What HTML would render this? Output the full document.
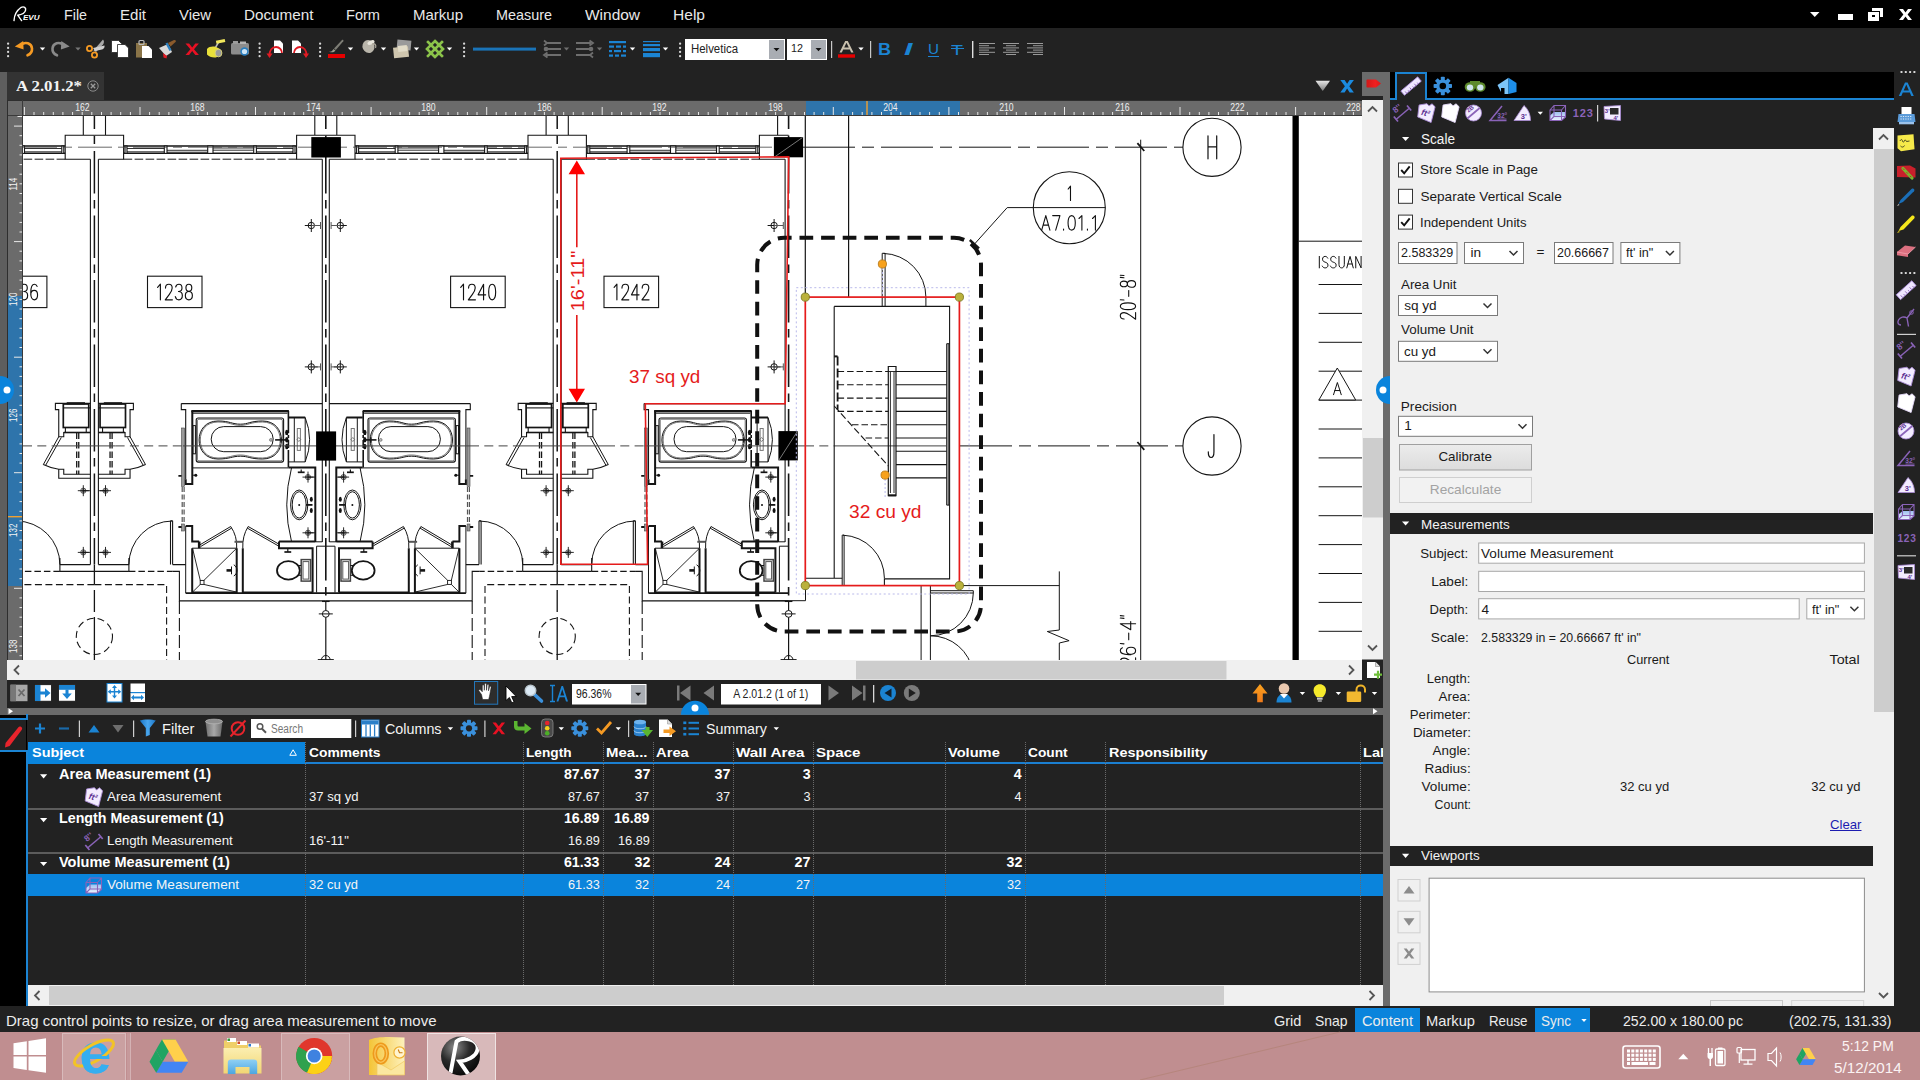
<!DOCTYPE html>
<html><head><meta charset="utf-8"><title>Revu</title>
<style>
*{box-sizing:border-box;margin:0;padding:0}
html,body{width:1920px;height:1080px;overflow:hidden;background:#222;font-family:"Liberation Sans",sans-serif;}
.a{position:absolute}
.t{position:absolute;white-space:nowrap;line-height:1}
svg{position:absolute;left:0;top:0;overflow:visible}
</style></head><body>
<!-- 00_base -->
<div class="a" style="left:0px;top:0px;width:1920px;height:28px;background:#000;"></div>
<div class="a" style="left:0px;top:28px;width:1920px;height:44px;background:#222;"></div>
<div class="a" style="left:0px;top:72px;width:1390px;height:29px;background:#222;"></div>
<div class="a" style="left:0px;top:72px;width:7px;height:643px;background:#5e5e5e;"></div>
<div class="a" style="left:7px;top:72px;width:97px;height:29px;background:#333;"></div>
<div class="a" style="left:8px;top:101px;width:1354px;height:15px;background:#6b6b6b;"></div>
<div class="a" style="left:8px;top:101px;width:15px;height:559px;background:#6b6b6b;"></div>
<div class="a" style="left:23px;top:116px;width:1339px;height:544px;background:#fff;"></div>
<div class="a" style="left:1362px;top:100px;width:21px;height:560px;background:#f0f0f0;"></div>
<div class="a" style="left:1362px;top:72px;width:28px;height:24px;background:#6b6b6b;"></div>
<div class="a" style="left:1383px;top:96px;width:7px;height:910px;background:#6b6b6b;"></div>
<div class="a" style="left:7px;top:660px;width:1376px;height:20px;background:#f0f0f0;"></div>
<div class="a" style="left:7px;top:680px;width:1376px;height:28px;background:#222;"></div>
<div class="a" style="left:7px;top:708px;width:1376px;height:7px;background:#6b6b6b;"></div>
<div class="a" style="left:0px;top:715px;width:1383px;height:291px;background:#222;"></div>
<div class="a" style="left:0px;top:715px;width:27px;height:291px;background:#000;"></div>
<div class="a" style="left:1390px;top:72px;width:504px;height:28px;background:#000;"></div>
<div class="a" style="left:1390px;top:100px;width:504px;height:906px;background:#222;"></div>
<div class="a" style="left:1390px;top:149px;width:483px;height:857px;background:#f0f0f0;"></div>
<div class="a" style="left:1873px;top:128px;width:21px;height:878px;background:#f0f0f0;"></div>
<div class="a" style="left:1894px;top:72px;width:26px;height:934px;background:#222;"></div>
<div class="a" style="left:0px;top:1006px;width:1920px;height:26px;background:#222;"></div>
<div class="a" style="left:0px;top:1032px;width:1920px;height:48px;background:#c08e90;"></div>
<!-- 10_menu -->
<div class="t" style="top:7.10px;font-size:15px;color:#e8e8e8;left:64.00px;transform:scaleX(0.9516);transform-origin:0 50%;">File</div>
<div class="t" style="top:7.10px;font-size:15px;color:#e8e8e8;left:120.00px;transform:scaleX(1.0059);transform-origin:0 50%;">Edit</div>
<div class="t" style="top:7.10px;font-size:15px;color:#e8e8e8;left:179.00px;transform:scaleX(0.9925);transform-origin:0 50%;">View</div>
<div class="t" style="top:7.10px;font-size:15px;color:#e8e8e8;left:244.00px;transform:scaleX(1.0166);transform-origin:0 50%;">Document</div>
<div class="t" style="top:7.10px;font-size:15px;color:#e8e8e8;left:346.00px;transform:scaleX(0.9716);transform-origin:0 50%;">Form</div>
<div class="t" style="top:7.10px;font-size:15px;color:#e8e8e8;left:413.00px;">Markup</div>
<div class="t" style="top:7.10px;font-size:15px;color:#e8e8e8;left:496.00px;transform:scaleX(0.9596);transform-origin:0 50%;">Measure</div>
<div class="t" style="top:7.10px;font-size:15px;color:#e8e8e8;left:585.00px;transform:scaleX(1.0309);transform-origin:0 50%;">Window</div>
<div class="t" style="top:7.10px;font-size:15px;color:#e8e8e8;left:673.00px;transform:scaleX(1.0373);transform-origin:0 50%;">Help</div>
<svg width="60" height="28" viewBox="0 -0.800 60 28"><path d="M14 19.800C14.200 15.500 16 10.200 21.200 6.500C24 5.200 26.200 7 25.600 9.400C25 12.200 21 14 17.700 14.400L21.600 19.800" fill="none" stroke="#fff" stroke-width="1.400" stroke-linecap="round" stroke-linejoin="round"/></svg>
<div class="t" style="top:14.74px;font-size:6.8px;color:#fff;font-weight:bold;font-style:italic;left:23.40px;transform:scaleX(1.1801);transform-origin:0 50%;">EVU</div>
<svg width="1920" height="28" viewBox="0 0 1920 28" shape-rendering="crispEdges"><path d="M1810 12h9.5l-4.75 5z" fill="#fff" shape-rendering="auto"/><rect x="1838" y="14" width="15" height="6" fill="#fff"/><rect x="1872" y="8" width="11" height="9" fill="#fff"/><rect x="1868" y="12" width="11" height="9" fill="#fff"/><rect x="1871" y="11" width="9" height="1" fill="#000"/><rect x="1879" y="11" width="1" height="7" fill="#000"/><rect x="1872" y="15" width="3" height="2" fill="#000"/><path d="M1899 9h4l2.5 3.6l2.5-3.6h4l-4.4 5.6l4.4 5.4h-4l-2.5-3.4l-2.5 3.4h-4l4.4-5.4z" fill="#fff" shape-rendering="auto"/></svg>
<!-- 11_toolbar -->
<svg width="1920" height="72" viewBox="0 0 1920 72"><rect x="7" y="42.5" width="2.2" height="2.2" rx="1" fill="#d8d8d8"/><rect x="7" y="46.7" width="2.2" height="2.2" rx="1" fill="#d8d8d8"/><rect x="7" y="50.8" width="2.2" height="2.2" rx="1" fill="#d8d8d8"/><rect x="7" y="55" width="2.2" height="2.2" rx="1" fill="#d8d8d8"/><path d="M20.800 45c4.500-3.800 10.700-1.800 11.200 3.500c.3 3.200-1.700 5.600-4.500 6.800" fill="none" stroke="#f59a23" stroke-width="2.600" stroke-linecap="round"/><path d="M14.800 46.600l8.400-5.600l.4 8.600z" fill="#f59a23"/><path d="M39.8 47.5h5.4l-2.7 3z" fill="#fff"/><g transform="translate(84.500 0) scale(-1 1)"><path d="M20.800 45c4.500-3.800 10.700-1.800 11.200 3.500c.3 3.200-1.700 5.600-4.500 6.800" fill="none" stroke="#8a8a8a" stroke-width="2.600" stroke-linecap="round"/><path d="M14.800 46.600l8.400-5.600l.4 8.600z" fill="#8a8a8a"/></g><path d="M75.3 47.5h5.4l-2.7 3z" fill="#777"/><path d="M93.500 50.500l9.500-11c1.500 1.500 1 3.500 0 5l-7 7.500z" fill="#a9a9a9"/><path d="M93 48l11.500-2.500c.5 2-1 3.500-2.500 4l-7 1.500z" fill="#cfcfcf"/><circle cx="89.500" cy="48.500" r="2.600" fill="none" stroke="#f59a23" stroke-width="1.800"/><circle cx="94.500" cy="55" r="2.600" fill="none" stroke="#f59a23" stroke-width="1.800"/><path d="M111.500 40.500h7l3 3v9h-10z" fill="#fff" stroke="#222" stroke-width=".8"/><path d="M117.500 44.500h7.500l3.500 3.500v9.500h-11z" fill="#fff" stroke="#222" stroke-width=".8"/><rect x="136" y="43" width="11" height="14.500" fill="#8a7448"/><rect x="139" y="40.500" width="5" height="4" rx="1" fill="none" stroke="#bbb" stroke-width="1.200"/><path d="M142 46h6.500l3.500 3.500v8.500h-10z" fill="#fff"/><path d="M159 48l9-4l4 8l-6 4z" fill="#d9d9d9"/><path d="M165.500 43.500l4 7.500l2-1l-4-7.500z" fill="#2a7fc0"/><path d="M168 43l6-3c1.500-.5 2.500 1 1.500 2l-5 4.500z" fill="#8a5a2c"/><path d="M163 53l4 3l-.5 2.500l-3-1z" fill="#e01b24"/><path d="M185.500 43.500h3.600l3.100 3.900l3.100-3.900h3.600l-4.900 5.700l4.900 5.700h-3.600l-3.100-3.900l-3.100 3.900h-3.600l4.900-5.700z" fill="#e81123"/><path d="M214 50l5-8.500" stroke="#bdbdbd" stroke-width="1.500"/><rect x="216" y="40" width="9" height="3" fill="#f2e85c" transform="rotate(-12 220 41)"/><path d="M207 49c2-2.500 6-3 9-2l4 2v6l-4 2.500c-4 .5-7-1-9-3z" fill="#e9e03a"/><ellipse cx="218.500" cy="53" rx="3.400" ry="3.800" fill="#9a9a9a" stroke="#d9d27a" stroke-width="1"/><rect x="231" y="43" width="18" height="11.500" rx="1.500" fill="#8c8c8c"/><rect x="233" y="41" width="5" height="3" fill="#9c9c9c"/><rect x="240" y="41.500" width="6" height="2.500" fill="#b5b5b5"/><circle cx="244.500" cy="51.500" r="4.200" fill="#2a7fc0"/><circle cx="244.500" cy="51.500" r="2.600" fill="#cfe6f7"/><rect x="258.5" y="42.5" width="2.2" height="2.2" rx="1" fill="#d8d8d8"/><rect x="258.5" y="46.7" width="2.2" height="2.2" rx="1" fill="#d8d8d8"/><rect x="258.5" y="50.8" width="2.2" height="2.2" rx="1" fill="#d8d8d8"/><rect x="258.5" y="55" width="2.2" height="2.2" rx="1" fill="#d8d8d8"/><path d="M274 40.500h6l3 3v9.500h-9z" fill="#fff"/><path d="M269.500 56c-.5-6 3-9 6.500-9s6 3 6 6" fill="none" stroke="#e01b24" stroke-width="1.800"/><path d="M266.500 53.500h6l-3 4.500z" fill="#e01b24"/><path d="M292 40.500h6l3 3v9.500h-9z" fill="#fff"/><path d="M294 53c0-3 2.500-6 6-6s7 3 6.500 9" fill="none" stroke="#e01b24" stroke-width="1.800"/><path d="M303 53.500h6l-3 4.500z" fill="#e01b24"/><rect x="319" y="42.5" width="2.2" height="2.2" rx="1" fill="#d8d8d8"/><rect x="319" y="46.7" width="2.2" height="2.2" rx="1" fill="#d8d8d8"/><rect x="319" y="50.8" width="2.2" height="2.2" rx="1" fill="#d8d8d8"/><rect x="319" y="55" width="2.2" height="2.2" rx="1" fill="#d8d8d8"/><rect x="328" y="54" width="17" height="4" fill="#e60000"/><path d="M329 51.500c2 .5 3.500-.5 4.500-2.500l2 1.500c-1.500 2-4 2.500-6.500 1z" fill="#9a9a8a"/><path d="M334 48.500l8-8.500c1-.5 1.800.3 1.300 1.300l-7.500 8.700z" fill="#7d7d75"/><path d="M347.8 47.5h5.4l-2.7 3z" fill="#fff"/><ellipse cx="368.500" cy="46.500" rx="6" ry="6.500" fill="#b9b5aa" transform="rotate(-25 368.500 46.500)"/><ellipse cx="371" cy="42.500" rx="3.800" ry="2" fill="#e8e5dc" transform="rotate(-25 371 42.500)"/><path d="M372 44c3-1 4.500 1 3.500 4" fill="none" stroke="#a8a498" stroke-width="1.300"/><path d="M380.8 47.5h5.4l-2.7 3z" fill="#fff"/><rect x="397" y="40" width="14" height="10" fill="#9a9a9a" transform="rotate(5 404 45)"/><rect x="393.500" y="47" width="15" height="10.500" fill="#cfc6ae" transform="rotate(-6 401 52)"/><rect x="398" y="45.500" width="9" height="6" fill="#e2dcc8" transform="rotate(-6 402 48)"/><path d="M413.8 47.5h5.4l-2.7 3z" fill="#fff"/><g stroke="#8bc34a" stroke-width="2.600" stroke-linecap="square"><path d="M428 42l14 14M428 56l14-14M435 41l8 8M427 49l8 8M435 57l8-8M427 49l8-8"/></g><path d="M446.8 47.5h5.4l-2.7 3z" fill="#fff"/><rect x="463" y="42.5" width="2.2" height="2.2" rx="1" fill="#d8d8d8"/><rect x="463" y="46.7" width="2.2" height="2.2" rx="1" fill="#d8d8d8"/><rect x="463" y="50.8" width="2.2" height="2.2" rx="1" fill="#d8d8d8"/><rect x="463" y="55" width="2.2" height="2.2" rx="1" fill="#d8d8d8"/><rect x="473" y="47.600" width="63" height="3" fill="#1a74b8"/><g stroke="#6e6e6e" stroke-width="1.800" fill="none"><path d="M546 43h15M547 49h14M546 55h15"/><path d="M544 40.500l3 2.500l-3 2.500M547.500 52.500l-3.500 2.500l3.500 2.500"/></g><circle cx="546" cy="49" r="2.300" fill="#6e6e6e"/><path d="M563.8 47.5h5.4l-2.7 3z" fill="#6e6e6e"/><g stroke="#6e6e6e" stroke-width="1.800" fill="none"><path d="M576 43h15M576 49h14M576 55h15"/><path d="M589.500 40.500l3.500 2.500l-3.500 2.500M593 52.500l-3 2.500l3 2.500"/></g><circle cx="591" cy="49" r="2.300" fill="#6e6e6e"/><path d="M596.8 47.5h5.4l-2.7 3z" fill="#6e6e6e"/><g fill="#1b84d3"><rect x="609" y="41" width="17" height="2.200"/><rect x="609" y="45.500" width="5" height="2.200"/><rect x="616" y="45.500" width="5" height="2.200"/><rect x="623" y="45.500" width="3" height="2.200"/><rect x="609" y="50" width="3" height="2.200"/><rect x="614" y="50" width="7" height="2.200"/><rect x="623" y="50" width="3" height="2.200"/><rect x="609" y="54.500" width="4" height="2.200"/><rect x="615" y="54.500" width="4" height="2.200"/><rect x="621" y="54.500" width="5" height="2.200"/></g><path d="M629.8 47.5h5.4l-2.7 3z" fill="#fff"/><g fill="#1b84d3"><rect x="643" y="41" width="17" height="1.200"/><rect x="643" y="44" width="17" height="2.200"/><rect x="643" y="48" width="17" height="3.200"/><rect x="643" y="53" width="17" height="4.200"/></g><path d="M662.8 47.5h5.4l-2.7 3z" fill="#fff"/><rect x="679" y="42.5" width="2.2" height="2.2" rx="1" fill="#d8d8d8"/><rect x="679" y="46.7" width="2.2" height="2.2" rx="1" fill="#d8d8d8"/><rect x="679" y="50.8" width="2.2" height="2.2" rx="1" fill="#d8d8d8"/><rect x="679" y="55" width="2.2" height="2.2" rx="1" fill="#d8d8d8"/><rect x="685" y="39" width="100" height="21" fill="#fff"/><rect x="769" y="40" width="15" height="19" fill="#a9adb3"/><path d="M773.500 48h6l-3 3.200z" fill="#111"/><rect x="787" y="39" width="40" height="21" fill="#fff"/><rect x="811" y="40" width="15" height="19" fill="#a9adb3"/><path d="M815.500 48h6l-3 3.200z" fill="#111"/><rect x="831" y="41" width="1.200" height="17" fill="#c8c8c8"/><rect x="838" y="54.300" width="17" height="3.400" fill="#e60000"/><path d="M839.500 52.500l5.700-11.500h2.600l5.700 11.500h-2.300l-1.400-3h-6.600l-1.400 3zM844.200 47.500h4.600l-2.300-4.800z" fill="#c9c0ae"/><path d="M858.3 47.5h5.4l-2.7 3z" fill="#fff"/><rect x="870" y="41" width="1.200" height="17" fill="#c8c8c8"/><rect x="972" y="41" width="1.400" height="17" fill="#e0e0e0"/><rect x="979" y="43.0" width="16" height="1" fill="#9a9a9a"/><rect x="979" y="45.2" width="10" height="1" fill="#9a9a9a"/><rect x="979" y="47.4" width="16" height="1" fill="#9a9a9a"/><rect x="979" y="49.6" width="10" height="1" fill="#9a9a9a"/><rect x="979" y="51.8" width="16" height="1" fill="#9a9a9a"/><rect x="979" y="54.0" width="10" height="1" fill="#9a9a9a"/><rect x="1003.0" y="43.0" width="16" height="1" fill="#9a9a9a"/><rect x="1006.0" y="45.2" width="10" height="1" fill="#9a9a9a"/><rect x="1003.0" y="47.4" width="16" height="1" fill="#9a9a9a"/><rect x="1006.0" y="49.6" width="10" height="1" fill="#9a9a9a"/><rect x="1003.0" y="51.8" width="16" height="1" fill="#9a9a9a"/><rect x="1006.0" y="54.0" width="10" height="1" fill="#9a9a9a"/><rect x="1027" y="43.0" width="16" height="1" fill="#9a9a9a"/><rect x="1033" y="45.2" width="10" height="1" fill="#9a9a9a"/><rect x="1027" y="47.4" width="16" height="1" fill="#9a9a9a"/><rect x="1033" y="49.6" width="10" height="1" fill="#9a9a9a"/><rect x="1027" y="51.8" width="16" height="1" fill="#9a9a9a"/><rect x="1033" y="54.0" width="10" height="1" fill="#9a9a9a"/></svg>
<div class="t" style="top:43.14px;font-size:12px;color:#222;left:691.00px;transform:scaleX(0.9523);transform-origin:0 50%;">Helvetica</div>
<div class="t" style="top:43.07px;font-size:11.5px;color:#222;left:791.00px;transform:scaleX(0.9381);transform-origin:0 50%;">12</div>
<div class="t" style="top:40.81px;font-size:17px;color:#1b84d3;font-weight:bold;left:878.00px;transform:scaleX(1.0589);transform-origin:0 50%;">B</div>
<div class="t" style="top:41.03px;font-size:16.5px;color:#1b84d3;font-weight:bold;font-style:italic;left:904.00px;transform:scaleX(1.8542);transform-origin:0 50%;">I</div>
<div class="t" style="top:41.30px;font-size:15px;color:#1b84d3;left:927.50px;transform:scaleX(1.0155);transform-origin:0 50%;">U</div>
<div class="a" style="left:927.5px;top:55.5px;width:11px;height:1.5px;background:#1b84d3;"></div>
<div class="t" style="top:41.80px;font-size:15px;color:#1b84d3;left:951.00px;transform:scaleX(1.3097);transform-origin:0 50%;">T</div>
<div class="a" style="left:951px;top:47.5px;width:12.5px;height:1.5px;background:#1b84d3;"></div>
<!-- 20_rulers -->
<div class="t" style="top:77.82px;font-size:15.5px;color:#f2f2f2;font-family:'Liberation Serif',serif;font-weight:bold;left:16.00px;transform:scaleX(1.0871);transform-origin:0 50%;">A 2.01.2*</div>
<svg width="1920" height="700" viewBox="0 0 1920 700"><circle cx="93" cy="86" r="5.2" fill="none" stroke="#8a8a8a" stroke-width="1"/><path d="M90.800 83.800l4.400 4.400M95.200 83.800l-4.400 4.400" stroke="#9a9a9a" stroke-width="1.300"/><defs><linearGradient id="tg" x1="0" y1="0" x2="0" y2="1"><stop offset="0" stop-color="#e6e6e6"/><stop offset="1" stop-color="#7d7d7d"/></linearGradient><linearGradient id="rg" x1="0" y1="0" x2="1" y2="0"><stop offset="0" stop-color="#d01818"/><stop offset=".6" stop-color="#f02020"/><stop offset="1" stop-color="#d81b1b"/></linearGradient></defs><path d="M1315.500 80.800h14.500l-7.250 10.200z" fill="url(#tg)"/><path d="M1340.300 80h4.300l2.500 3.800l2.500-3.800h4.300l-4.600 6.200l4.600 6.200h-4.300l-2.500-3.800l-2.500 3.800h-4.300l4.600-6.200z" fill="#1b8be0"/><path d="M1367.500 79.600h8.500l5 4l-5 4h-8.500c-.6 0-1-.4-1-1v-6c0-.6.4-1 1-1z" fill="url(#rg)"/><rect x="7" y="100" width="1355" height="1" fill="#2e2e2e"/><rect x="7" y="115" width="1355" height="1" fill="#3a3a3a"/><rect x="7" y="100" width="1" height="560" fill="#2e2e2e"/><rect x="22" y="100" width="1" height="560" fill="#3a3a3a"/><rect x="806" y="101" width="154" height="14" fill="#2e74ab"/><rect x="8" y="296" width="14" height="290" fill="#2e74ab"/><path d="M24.4 107v8M34.0 112v3M43.7 112v3M53.3 112v3M62.9 112v3M72.6 112v3M82.2 112v3M91.8 112v3M101.5 112v3M111.1 112v3M120.7 112v3M130.4 112v3M140.0 107v8M149.6 112v3M159.2 112v3M168.9 112v3M178.5 112v3M188.1 112v3M197.8 112v3M207.4 112v3M217.0 112v3M226.7 112v3M236.3 112v3M245.9 112v3M255.5 107v8M265.2 112v3M274.8 112v3M284.4 112v3M294.1 112v3M303.7 112v3M313.3 112v3M323.0 112v3M332.6 112v3M342.2 112v3M351.8 112v3M361.5 112v3M371.1 107v8M380.7 112v3M390.4 112v3M400.0 112v3M409.6 112v3M419.2 112v3M428.9 112v3M438.5 112v3M448.1 112v3M457.8 112v3M467.4 112v3M477.0 112v3M486.7 107v8M496.3 112v3M505.9 112v3M515.6 112v3M525.2 112v3M534.8 112v3M544.4 112v3M554.1 112v3M563.7 112v3M573.3 112v3M583.0 112v3M592.6 112v3M602.2 107v8M611.9 112v3M621.5 112v3M631.1 112v3M640.7 112v3M650.4 112v3M660.0 112v3M669.6 112v3M679.3 112v3M688.9 112v3M698.5 112v3M708.2 112v3M717.8 107v8M727.4 112v3M737.0 112v3M746.7 112v3M756.3 112v3M765.9 112v3M775.6 112v3M785.2 112v3M794.8 112v3M804.5 112v3M814.1 112v3M823.7 112v3M833.3 107v8M843.0 112v3M852.6 112v3M862.2 112v3M871.9 112v3M881.5 112v3M891.1 112v3M900.8 112v3M910.4 112v3M920.0 112v3M929.6 112v3M939.3 112v3M948.9 107v8M958.5 112v3M968.2 112v3M977.8 112v3M987.4 112v3M997.1 112v3M1006.7 112v3M1016.3 112v3M1025.9 112v3M1035.6 112v3M1045.2 112v3M1054.8 112v3M1064.5 107v8M1074.1 112v3M1083.7 112v3M1093.4 112v3M1103.0 112v3M1112.6 112v3M1122.2 112v3M1131.9 112v3M1141.5 112v3M1151.1 112v3M1160.8 112v3M1170.4 112v3M1180.0 107v8M1189.7 112v3M1199.3 112v3M1208.9 112v3M1218.5 112v3M1228.2 112v3M1237.8 112v3M1247.4 112v3M1257.1 112v3M1266.7 112v3M1276.3 112v3M1286.0 112v3M1295.6 107v8M1305.2 112v3M1314.8 112v3M1324.5 112v3M1334.1 112v3M1343.7 112v3M1353.4 112v3" stroke="#e8e8e8" stroke-width="1"/><path d="M19.500 116.4h2.500M14 126.1h8M19.500 135.7h2.500M19.500 145.3h2.500M19.500 154.9h2.500M19.500 164.6h2.500M19.500 174.2h2.500M19.500 183.8h2.500M19.500 193.5h2.500M19.500 203.1h2.500M19.500 212.7h2.500M19.500 222.4h2.500M19.500 232.0h2.500M14 241.6h8M19.500 251.2h2.500M19.500 260.9h2.500M19.500 270.5h2.500M19.500 280.1h2.500M19.500 289.8h2.500M19.500 299.4h2.500M19.500 309.0h2.500M19.500 318.7h2.500M19.500 328.3h2.500M19.500 337.9h2.500M19.500 347.5h2.500M14 357.2h8M19.500 366.8h2.500M19.500 376.4h2.500M19.500 386.1h2.500M19.500 395.7h2.500M19.500 405.3h2.500M19.500 415.0h2.500M19.500 424.6h2.500M19.500 434.2h2.500M19.500 443.9h2.500M19.500 453.5h2.500M19.500 463.1h2.500M14 472.7h8M19.500 482.4h2.500M19.500 492.0h2.500M19.500 501.6h2.500M19.500 511.3h2.500M19.500 520.9h2.500M19.500 530.5h2.500M19.500 540.1h2.500M19.500 549.8h2.500M19.500 559.4h2.500M19.500 569.0h2.500M19.500 578.7h2.500M14 588.3h8M19.500 597.9h2.500M19.500 607.6h2.500M19.500 617.2h2.500M19.500 626.8h2.500M19.500 636.5h2.500M19.500 646.1h2.500M19.500 655.7h2.500" stroke="#e8e8e8" stroke-width="1"/><rect x="866.300" y="101" width="1.400" height="14" fill="#f0a030"/><rect x="8" y="516" width="14" height="1.400" fill="#f0a030"/><rect x="17.500" y="116" width="4.500" height="1" fill="#e8e8e8"/></svg>
<div class="t" style="top:102.73px;font-size:10px;color:#f0f0f0;left:73.56px;transform:scaleX(0.8631);transform-origin:50% 50%;">162</div>
<div class="t" style="top:102.73px;font-size:10px;color:#f0f0f0;left:189.12px;transform:scaleX(0.8631);transform-origin:50% 50%;">168</div>
<div class="t" style="top:102.73px;font-size:10px;color:#f0f0f0;left:304.68px;transform:scaleX(0.8631);transform-origin:50% 50%;">174</div>
<div class="t" style="top:102.73px;font-size:10px;color:#f0f0f0;left:420.24px;transform:scaleX(0.8631);transform-origin:50% 50%;">180</div>
<div class="t" style="top:102.73px;font-size:10px;color:#f0f0f0;left:535.80px;transform:scaleX(0.8631);transform-origin:50% 50%;">186</div>
<div class="t" style="top:102.73px;font-size:10px;color:#f0f0f0;left:651.36px;transform:scaleX(0.8631);transform-origin:50% 50%;">192</div>
<div class="t" style="top:102.73px;font-size:10px;color:#f0f0f0;left:766.92px;transform:scaleX(0.8631);transform-origin:50% 50%;">198</div>
<div class="t" style="top:102.73px;font-size:10px;color:#f0f0f0;left:882.48px;transform:scaleX(0.8631);transform-origin:50% 50%;">204</div>
<div class="t" style="top:102.73px;font-size:10px;color:#f0f0f0;left:998.04px;transform:scaleX(0.8631);transform-origin:50% 50%;">210</div>
<div class="t" style="top:102.73px;font-size:10px;color:#f0f0f0;left:1113.60px;transform:scaleX(0.8631);transform-origin:50% 50%;">216</div>
<div class="t" style="top:102.73px;font-size:10px;color:#f0f0f0;left:1229.16px;transform:scaleX(0.8631);transform-origin:50% 50%;">222</div>
<div class="t" style="top:102.73px;font-size:10px;color:#f0f0f0;left:1344.72px;transform:scaleX(0.8631);transform-origin:50% 50%;">228</div>
<div class="t" style="left:3.1999999999999993px;top:178.5px;width:20px;height:10.5px;font-size:10.5px;color:#f4f4f4;text-align:center;transform:rotate(-90deg) scaleX(.76);">114</div>
<div class="t" style="left:3.1999999999999993px;top:294.1px;width:20px;height:10.5px;font-size:10.5px;color:#f4f4f4;text-align:center;transform:rotate(-90deg) scaleX(.76);">120</div>
<div class="t" style="left:3.1999999999999993px;top:409.7px;width:20px;height:10.5px;font-size:10.5px;color:#f4f4f4;text-align:center;transform:rotate(-90deg) scaleX(.76);">126</div>
<div class="t" style="left:3.1999999999999993px;top:525.2px;width:20px;height:10.5px;font-size:10.5px;color:#f4f4f4;text-align:center;transform:rotate(-90deg) scaleX(.76);">132</div>
<div class="t" style="left:3.1999999999999993px;top:640.8px;width:20px;height:10.5px;font-size:10.5px;color:#f4f4f4;text-align:center;transform:rotate(-90deg) scaleX(.76);">138</div>
<!-- 30_drawing -->
<svg width="1920" height="1080" viewBox="0 0 1920 1080"><defs><clipPath id="cv"><rect x="23" y="116" width="1339" height="544"/></clipPath><g id="U"><path d="M98.4 159.2V564.6" fill="none" stroke="#151515" stroke-width="1.1"/><path d="M322.3 159.2V542" fill="none" stroke="#151515" stroke-width="1.1"/><path d="M94.4 135.3H123.6V159.2H98.4M105.5 116V135.3" fill="none" stroke="#151515" stroke-width="1.1"/><path d="M325.8 135.3H296.6V159.2H322.3M314.8 116V135.3" fill="none" stroke="#151515" stroke-width="1.1"/><path d="M123.6 146.1H296.6M123.6 153.3H296.6" fill="none" stroke="#151515" stroke-width="1.5"/><path d="M127 148.5H164.3M127 151.8H164.3M167 150.3H207.7M167 152.2H207.7M213 148H253.7M213 150.2H253.7M256.4 148.5H293M256.4 151.8H293" fill="none" stroke="#333" stroke-width="1"/><rect x="125" y="146" width="2.0" height="7.4" fill="#fff" stroke="#151515" stroke-width="1.1"/><rect x="164.3" y="146" width="2.7" height="7.4" fill="#fff" stroke="#151515" stroke-width="1.1"/><rect x="207.7" y="146" width="5.3" height="7.4" fill="#fff" stroke="#151515" stroke-width="1.1"/><rect x="253.7" y="146" width="2.7" height="7.4" fill="#fff" stroke="#151515" stroke-width="1.1"/><rect x="293" y="146" width="2.0" height="7.4" fill="#fff" stroke="#151515" stroke-width="1.1"/><path d="M123.6 159.2H296.6" fill="none" stroke="#151515" stroke-width="1" stroke-dasharray="8.6 2.4"/><circle cx="311.3" cy="225.5" r="3.2" fill="none" stroke="#151515" stroke-width="1"/><path d="M304.8 225.5H317.8M311.3 219.0V232.0" fill="none" stroke="#151515" stroke-width="1"/><path d="M311.3 225.5H320.5M320.5 222.0V229.0" fill="none" stroke="#555" stroke-width="1"/><circle cx="311.3" cy="366.9" r="3.2" fill="none" stroke="#151515" stroke-width="1"/><path d="M304.8 366.9H317.8M311.3 360.4V373.4" fill="none" stroke="#151515" stroke-width="1"/><path d="M311.3 366.9H320.5M320.5 363.4V370.4" fill="none" stroke="#555" stroke-width="1"/><path d="M103.0 490.7L105.5 488.2L108.0 490.7L105.5 493.2Z" fill="#777" stroke="none"/><circle cx="105.5" cy="490.7" r="2.6" fill="none" stroke="#151515" stroke-width=".7"/><path d="M100.0 490.7H111.0M105.5 485.2V496.2" fill="none" stroke="#151515" stroke-width="0.9"/><path d="M98.4 490.7H105.5" fill="none" stroke="#151515" stroke-width="0.9"/><path d="M103.0 552.4L105.5 549.9L108.0 552.4L105.5 554.9Z" fill="#777" stroke="none"/><circle cx="105.5" cy="552.4" r="2.6" fill="none" stroke="#151515" stroke-width=".7"/><path d="M100.0 552.4H111.0M105.5 546.9V557.9" fill="none" stroke="#151515" stroke-width="0.9"/><path d="M98.4 552.4H105.5" fill="none" stroke="#151515" stroke-width="0.9"/><path d="M305.5 477.1L308 474.6L310.5 477.1L308 479.6Z" fill="#777" stroke="none"/><circle cx="308" cy="477.1" r="2.6" fill="none" stroke="#151515" stroke-width=".7"/><path d="M302.5 477.1H313.5M308 471.6V482.6" fill="none" stroke="#151515" stroke-width="0.9"/><path d="M308 477.1H315.3" fill="none" stroke="#151515" stroke-width="0.9"/><path d="M305.5 532.8L308 530.3L310.5 532.8L308 535.3Z" fill="#777" stroke="none"/><circle cx="308" cy="532.8" r="2.6" fill="none" stroke="#151515" stroke-width=".7"/><path d="M302.5 532.8H313.5M308 527.3V538.3" fill="none" stroke="#151515" stroke-width="0.9"/><path d="M308 532.8H315.3" fill="none" stroke="#151515" stroke-width="0.9"/><path d="M98.4 403.4H133.4V409.6H130.050V436.7H125.050V432.5H98.4" fill="none" stroke="#151515" stroke-width="1.1"/><path d="M130.050 436.7L145.5 464.6M127.500 437.5L143 465" fill="none" stroke="#151515" stroke-width="1"/><path d="M145.5 464.6Q138 468.3 130.050 469.2H125.050V474.2H98.4M130.050 469.2V478.3H98.4" fill="none" stroke="#151515" stroke-width="1.1"/><rect x="100.050" y="404" width="25.450" height="23.5" fill="none" stroke="#151515" stroke-width="1.7"/><path d="M98.4 407.9H125.5" fill="none" stroke="#151515" stroke-width="1.1"/><path d="M102.550 427.5V432.5M123.400 427.5V432.5" fill="none" stroke="#151515" stroke-width="1.1"/><path d="M103.800 403.3H122.100" fill="none" stroke="#151515" stroke-width="2.2"/><path d="M98.4 432.5H125.050" fill="none" stroke="#151515" stroke-width="1.6"/><path d="M110.050 432.5V474.2M112.100 432.5V474.2" fill="none" stroke="#151515" stroke-width="1.3" stroke-dasharray="6.5 3"/><path d="M170.5 520.8V564.6M172.6 520.8V564.6M170.5 520.8H172.6" fill="none" stroke="#151515" stroke-width="1.1"/><path d="M172.3 521A43.6 43.6 0 0 0 128.9 564.6" fill="none" stroke="#151515" stroke-width="1"/><path d="M128.9 558V571.4M98.4 564.6H128.9M172.6 564.6H185.7M94.4 571.4H128.9M172.3 571.4H179.4V600.9H325.8" fill="none" stroke="#151515" stroke-width="1.1"/><path d="M128.9 571.4H172.3" fill="none" stroke="#151515" stroke-width="1.1" stroke-dasharray="6.5 3"/><path d="M94.4 584.6H166.6V660" fill="none" stroke="#151515" stroke-width="1.1" stroke-dasharray="7 3.5"/><path d="M179.4 601V660" fill="none" stroke="#151515" stroke-width="1.1" stroke-dasharray="13 4"/><path d="M181.3 403.6H322.3M181.3 403.6V409.6H185.7V479.3" fill="none" stroke="#151515" stroke-width="1.1"/><path d="M185.7 479.3V483.9H192.3V411" fill="none" stroke="#151515" stroke-width="2"/><path d="M191.3 411.2H288.9" fill="none" stroke="#151515" stroke-width="2.2"/><path d="M288.4 411V467.6" fill="none" stroke="#151515" stroke-width="1.6" stroke-dasharray="22 2 3 2 8 2"/><path d="M192.3 413.2H287.5M192.3 467.9H288.9" fill="none" stroke="#151515" stroke-width="1"/><rect x="196.2" y="418" width="87.4" height="44.1" rx="2" fill="none" stroke="#151515" stroke-width="1.1"/><rect x="197.4" y="419.2" width="85" height="41.7" rx="1.5" fill="none" stroke="#151515" stroke-width=".6"/><path d="M218 421C230 421 232 424.2 240.3 424.2C248.5 424.2 250 421 262.5 421C275 421 281.4 430 281.4 440C281.4 450 275 459 262.5 459C250 459 248.5 456.2 240.3 456.2C232 456.2 230 459 218 459C205.5 459 199.1 450 199.1 440C199.1 430 205.5 421 218 421Z" fill="none" stroke="#151515" stroke-width="1"/><path d="M218 422C230 422 232 425.400 240.3 425.400C248.5 425.400 250 422 262.5 422C274 422 280.2 430 280.2 440C280.2 450 274 458 262.5 458C250 458 248.5 455 240.3 455C232 455 230 458 218 458C206.5 458 200.3 450 200.3 440C200.3 430 206.5 422 218 422Z" fill="none" stroke="#151515" stroke-width="0.6"/><rect x="211.2" y="426.6" width="62" height="25.1" rx="12.5" fill="none" stroke="#151515" stroke-width="1"/><circle cx="270.9" cy="439.9" r="1.4" fill="#bbb" stroke="#666" stroke-width=".7"/><path d="M275.1 439.9H286" fill="none" stroke="#151515" stroke-width="1.6"/><path d="M280.9 437.4V442.4" fill="none" stroke="#151515" stroke-width="1.2"/><ellipse cx="286.8" cy="432.4" rx="1.7" ry="2.7" fill="#111"/><ellipse cx="286.8" cy="439.7" rx="1.7" ry="2.7" fill="#111"/><ellipse cx="286.8" cy="446.5" rx="1.7" ry="2.7" fill="#111"/><rect x="193" y="425.6" width="2.4" height="28.2" fill="none" stroke="#151515" stroke-width="1"/><rect x="181.6" y="428" width="2.9" height="58.300" fill="#9a9a9a" stroke="#444" stroke-width=".6"/><path d="M182.2 487V524M184.1 487V524" fill="none" stroke="#555" stroke-width="1.2" stroke-dasharray="5 2.5"/><rect x="181.6" y="524" width="2.9" height="7" fill="#9a9a9a" stroke="#444" stroke-width=".6"/><path d="M178.4 475.9H181.6M178.4 527H181.6" fill="none" stroke="#151515" stroke-width="1.8"/><circle cx="195.8" cy="475.2" r="1.5" fill="#111"/><path d="M192.3 475.2H195.8" fill="none" stroke="#151515" stroke-width="1"/><path d="M288.9 417.5H305.2" fill="none" stroke="#151515" stroke-width="2"/><path d="M294.3 417.5V461.9M288.9 461.9H305.2M305.2 417.5V461.9M305.2 417.5Q314 439.7 305.2 461.9" fill="none" stroke="#151515" stroke-width="1"/><rect x="297.3" y="428.5" width="3.1" height="21.9" fill="none" stroke="#777" stroke-width="1"/><path d="M297 439.5L298.8 437.5L300.7 439.5L298.8 441.5Z" fill="none" stroke="#666" stroke-width="0.8"/><path d="M288.9 467.4H315.3V542" fill="none" stroke="#151515" stroke-width="2"/><path d="M291.5 467.9Q282 505 291.5 541.5" fill="none" stroke="#151515" stroke-width="1"/><ellipse cx="299.2" cy="504.9" rx="8.6" ry="14.9" fill="none" stroke="#151515" stroke-width="1"/><ellipse cx="299.2" cy="504.9" rx="7" ry="13.2" fill="none" stroke="#151515" stroke-width="1"/><circle cx="299.2" cy="504.9" r="1" fill="#111"/><path d="M305.9 504.9H312.5" fill="none" stroke="#151515" stroke-width="1.8"/><ellipse cx="311.3" cy="499.2" rx="1.5" ry="2.5" fill="#111"/><ellipse cx="311.3" cy="510.6" rx="1.5" ry="2.5" fill="#111"/><path d="M297.8 472.3H304.59999999999997" fill="none" stroke="#151515" stroke-width="1.7"/><path d="M301.2 469.4V472.3" fill="none" stroke="#151515" stroke-width="1.2"/><path d="M284.40000000000003 552.0H291.2" fill="none" stroke="#151515" stroke-width="1.7"/><path d="M287.8 549.1V552.0" fill="none" stroke="#151515" stroke-width="1.2"/><path d="M279 541.5H315.3" fill="none" stroke="#151515" stroke-width="2"/><path d="M279 541.5V548.2H312.6V592.5" fill="none" stroke="#151515" stroke-width="2"/><path d="M315.3 541.8H322.3" fill="none" stroke="#151515" stroke-width="1"/><path d="M185.7 526.1H192.2V541.5H199.2" fill="none" stroke="#151515" stroke-width="2"/><path d="M185.7 526.1V593.2" fill="none" stroke="#151515" stroke-width="1"/><path d="M199.2 541.5V548.2" fill="none" stroke="#151515" stroke-width="2.6"/><path d="M192.2 548.2V592.5H236.7V548.2" fill="none" stroke="#151515" stroke-width="2"/><path d="M192.2 548.2H236.7" fill="none" stroke="#151515" stroke-width="1"/><path d="M192.6 548.6L200.3 580.5M236.3 548.6L203.8 580.5M236.3 592L203.8 584.4M192.6 592L200.3 584.4" fill="none" stroke="#151515" stroke-width="0.9"/><rect x="200.2" y="580.4" width="3.8" height="4" fill="#fff" stroke="#151515" stroke-width=".9"/><path d="M226.5 570.4H231.5" fill="none" stroke="#151515" stroke-width="2.6"/><path d="M233.8 564.8A6.5 6.5 0 0 1 233.8 576" fill="none" stroke="#151515" stroke-width="1"/><path d="M231.5 566.5V574.3" fill="none" stroke="#151515" stroke-width="1"/><path d="M199.8 544.9L230.7 526.5M200.7 546.5L231.6 528.1" fill="none" stroke="#151515" stroke-width="1"/><path d="M230.7 526.5Q237.3 536 236.7 548.2" fill="none" stroke="#151515" stroke-width="1"/><path d="M234.5 541.8H242.8" fill="none" stroke="#555" stroke-width="2"/><path d="M248.2 526.5L279 544.2M247.3 528.1L278.2 545.8" fill="none" stroke="#151515" stroke-width="1"/><path d="M248.2 526.5Q242.2 536 242.8 548.2" fill="none" stroke="#151515" stroke-width="1"/><path d="M242.8 548.2V592.5H312.6" fill="none" stroke="#151515" stroke-width="2"/><ellipse cx="288.4" cy="570.4" rx="11.4" ry="9.2" fill="none" stroke="#151515" stroke-width="1.8"/><rect x="301.2" y="559.6" width="9.4" height="21.5" fill="none" stroke="#444" stroke-width="1.5"/><rect x="303" y="561.6" width="5.8" height="17.5" fill="none" stroke="#555" stroke-width="1"/><path d="M298.5 565.5H301.2M298.5 575.3H301.2" fill="none" stroke="#151515" stroke-width="1"/><path d="M316.6 546.2H325.8M316.6 546.2V592.5" fill="none" stroke="#151515" stroke-width="1"/><path d="M185.7 593.2H325.8" fill="none" stroke="#151515" stroke-width="1.8"/></g></defs><g clip-path="url(#cv)"><use href="#U"/><use href="#U" transform="translate(188.8 0) scale(-1 1)"/><use href="#U" transform="translate(651.6 0) scale(-1 1)"/><use href="#U" transform="translate(462.8 0)"/><path d="M94.4 116V564.6" fill="none" stroke="#151515" stroke-width="1.5" stroke-dasharray="42.5 6.5 8.5 7" stroke-dashoffset="29.6"/><path d="M94.4 564.6V584.6" fill="none" stroke="#151515" stroke-width="1.3"/><path d="M94.4 590V660" fill="none" stroke="#151515" stroke-width="1.3" stroke-dasharray="22 5 100 0"/><circle cx="94.4" cy="636.4" r="18.1" fill="none" stroke="#151515" stroke-width="1.1" stroke-dasharray="7 4"/><path d="M557.2 116V564.6" fill="none" stroke="#151515" stroke-width="1.5" stroke-dasharray="42.5 6.5 8.5 7" stroke-dashoffset="29.6"/><path d="M557.2 564.6V584.6" fill="none" stroke="#151515" stroke-width="1.3"/><path d="M557.2 590V660" fill="none" stroke="#151515" stroke-width="1.3" stroke-dasharray="22 5 100 0"/><circle cx="557.2" cy="636.4" r="18.1" fill="none" stroke="#151515" stroke-width="1.1" stroke-dasharray="7 4"/><path d="M325.8 116V601" fill="none" stroke="#151515" stroke-width="1.6" stroke-dasharray="42.5 6.5 8.5 7" stroke-dashoffset="29.6"/><path d="M322.0 601.4H329.6" fill="none" stroke="#151515" stroke-width="1.3"/><path d="M325.8 601V660" fill="none" stroke="#151515" stroke-width="1.2"/><circle cx="325.8" cy="613.9" r="3.4" fill="#fff" stroke="#151515" stroke-width="1"/><path d="M318.8 613.9H332.8" fill="none" stroke="#151515" stroke-width="1"/><path d="M321.5 659.8A4.3 4.3 0 0 1 330.1 659.8M317.8 659.6H333.8" fill="none" stroke="#151515" stroke-width="1"/><path d="M788.6 116V601" fill="none" stroke="#151515" stroke-width="1.6" stroke-dasharray="42.5 6.5 8.5 7" stroke-dashoffset="29.6"/><path d="M784.8000000000001 601.4H792.4" fill="none" stroke="#151515" stroke-width="1.3"/><path d="M788.6 601V660" fill="none" stroke="#151515" stroke-width="1.2"/><circle cx="788.6" cy="613.9" r="3.4" fill="#fff" stroke="#151515" stroke-width="1"/><path d="M781.6 613.9H795.6" fill="none" stroke="#151515" stroke-width="1"/><path d="M784.3000000000001 659.8A4.3 4.3 0 0 1 792.9 659.8M780.6 659.6H796.6" fill="none" stroke="#151515" stroke-width="1"/><path d="M23 147.2H803" fill="none" stroke="#444" stroke-width="0.8" stroke-dasharray="34 6 9 6"/><path d="M803 147.2H1183" fill="none" stroke="#151515" stroke-width="1" stroke-dasharray="52 7 12 7"/><path d="M23 445.9H52.8M115.6 445.9H183M470 445.9H517M606 445.9H644.6M805 445.9H834" fill="none" stroke="#444" stroke-width="1" stroke-dasharray="9 5.3"/><path d="M52.8 445.9H115.6M183 445.9H470M517 445.9H606M644.6 445.9H805M834 445.9H946" fill="none" stroke="#444" stroke-width="1"/><path d="M960 445.9H1183" fill="none" stroke="#151515" stroke-width="1" stroke-dasharray="52 7 12 7"/><rect x="311.3" y="137.1" width="29.6" height="20.4" fill="#000"/><rect x="316.1" y="431.4" width="20" height="29.2" fill="#000"/><rect x="773.9" y="137.1" width="29.2" height="20.2" fill="#000"/><rect x="778.4" y="431.1" width="19.4" height="29.3" fill="#000"/><path d="M774.5 157L802.5 137.500M779 460L797.300 431.500" fill="none" stroke="#aaa" stroke-width="0.7"/><rect x="147.5" y="276.2" width="54.5" height="31.400" fill="#fff" stroke="#151515" stroke-width="1.1"/><g fill="none" stroke="#111" stroke-width="1.15" stroke-linecap="round" stroke-linejoin="round" vector-effect="non-scaling-stroke"><path vector-effect="non-scaling-stroke" transform="translate(156.17 284.20) scale(11.717 15.600)" d="M.12 .2L.36 0V1"/><path vector-effect="non-scaling-stroke" transform="translate(164.67 284.20) scale(11.717 15.600)" d="M.07 .25C.07 .08 .2 0 .36 0C.53 0 .64 .1 .64 .25C.64 .4 .55 .5 .4 .65L.05 1H.66"/><path vector-effect="non-scaling-stroke" transform="translate(174.72 284.20) scale(11.717 15.600)" d="M.08 .18C.12 .06 .22 0 .36 0C.52 0 .62 .1 .62 .24C.62 .4 .5 .47 .32 .47C.52 .47 .65 .56 .65 .73C.65 .9 .52 1 .35 1C.2 1 .09 .93 .05 .8"/><path vector-effect="non-scaling-stroke" transform="translate(184.76 284.20) scale(11.717 15.600)" d="M.35 0C.2 0 .1 .09 .1 .23C.1 .38 .2 .46 .35 .46C.5 .46 .6 .38 .6 .23C.6 .09 .5 0 .35 0ZM.35 .46C.17 .46 .05 .56 .05 .73C.05 .9 .17 1 .35 1C.53 1 .65 .9 .65 .73C.65 .56 .53 .46 .35 .46Z"/></g><rect x="450.6" y="276.2" width="54.6" height="31.400" fill="#fff" stroke="#151515" stroke-width="1.1"/><g fill="none" stroke="#111" stroke-width="1.15" stroke-linecap="round" stroke-linejoin="round" vector-effect="non-scaling-stroke"><path vector-effect="non-scaling-stroke" transform="translate(459.31 284.20) scale(11.633 15.600)" d="M.12 .2L.36 0V1"/><path vector-effect="non-scaling-stroke" transform="translate(467.76 284.20) scale(11.633 15.600)" d="M.07 .25C.07 .08 .2 0 .36 0C.53 0 .64 .1 .64 .25C.64 .4 .55 .5 .4 .65L.05 1H.66"/><path vector-effect="non-scaling-stroke" transform="translate(477.75 284.20) scale(11.633 15.600)" d="M.5 1V0L.03 .68H.68"/><path vector-effect="non-scaling-stroke" transform="translate(487.98 284.20) scale(11.633 15.600)" d="M.36 0C.13 0 .06 .25 .06 .5C.06 .75 .13 1 .36 1C.59 1 .66 .75 .66 .5C.66 .25 .59 0 .36 0Z"/></g><rect x="604" y="276.2" width="54.6" height="31.400" fill="#fff" stroke="#151515" stroke-width="1.1"/><g fill="none" stroke="#111" stroke-width="1.15" stroke-linecap="round" stroke-linejoin="round" vector-effect="non-scaling-stroke"><path vector-effect="non-scaling-stroke" transform="translate(612.71 284.20) scale(11.633 15.600)" d="M.12 .2L.36 0V1"/><path vector-effect="non-scaling-stroke" transform="translate(621.16 284.20) scale(11.633 15.600)" d="M.07 .25C.07 .08 .2 0 .36 0C.53 0 .64 .1 .64 .25C.64 .4 .55 .5 .4 .65L.05 1H.66"/><path vector-effect="non-scaling-stroke" transform="translate(631.15 284.20) scale(11.633 15.600)" d="M.5 1V0L.03 .68H.68"/><path vector-effect="non-scaling-stroke" transform="translate(641.38 284.20) scale(11.633 15.600)" d="M.07 .25C.07 .08 .2 0 .36 0C.53 0 .64 .1 .64 .25C.64 .4 .55 .5 .4 .65L.05 1H.66"/></g><rect x="-8" y="276.2" width="54.9" height="31.400" fill="#fff" stroke="#151515" stroke-width="1.1"/><g fill="none" stroke="#111" stroke-width="1.15" stroke-linecap="round" stroke-linejoin="round" vector-effect="non-scaling-stroke"><path vector-effect="non-scaling-stroke" transform="translate(1.47 284.20) scale(11.717 15.600)" d="M.12 .2L.36 0V1"/><path vector-effect="non-scaling-stroke" transform="translate(9.97 284.20) scale(11.717 15.600)" d="M.07 .25C.07 .08 .2 0 .36 0C.53 0 .64 .1 .64 .25C.64 .4 .55 .5 .4 .65L.05 1H.66"/><path vector-effect="non-scaling-stroke" transform="translate(20.02 284.20) scale(11.717 15.600)" d="M.08 .18C.12 .06 .22 0 .36 0C.52 0 .62 .1 .62 .24C.62 .4 .5 .47 .32 .47C.52 .47 .65 .56 .65 .73C.65 .9 .52 1 .35 1C.2 1 .09 .93 .05 .8"/><path vector-effect="non-scaling-stroke" transform="translate(30.06 284.20) scale(11.717 15.600)" d="M.6 .14C.56 .05 .48 0 .38 0C.18 0 .06 .2 .06 .55C.06 .85 .18 1 .36 1C.52 1 .64 .87 .64 .7C.64 .52 .52 .4 .36 .4C.2 .4 .06 .52 .06 .7"/></g><path d="M805.3 116V297M848.6 116V297" fill="none" stroke="#151515" stroke-width="1.2"/><rect x="757.2" y="237.8" width="223.800" height="393.800" rx="27" fill="none" stroke="#111" stroke-width="4" stroke-dasharray="13.7 7.9" stroke-dashoffset="-15.3"/><path d="M974.4 244.2L1007.2 207.6H1105.3" fill="none" stroke="#151515" stroke-width="1"/><path d="M969.8 240L979 248.4" fill="none" stroke="#151515" stroke-width="2.4"/><circle cx="1069.3" cy="207.7" r="36" fill="none" stroke="#151515" stroke-width="1.1"/><g fill="none" stroke="#111" stroke-width="1.1" stroke-linecap="round" stroke-linejoin="round" vector-effect="non-scaling-stroke"><path vector-effect="non-scaling-stroke" transform="translate(1066.97 186.20) scale(9.781 14.200)" d="M.12 .2L.36 0V1"/></g><g fill="none" stroke="#111" stroke-width="1.1" stroke-linecap="round" stroke-linejoin="round" vector-effect="non-scaling-stroke"><path vector-effect="non-scaling-stroke" transform="translate(1041.45 215.60) scale(12.083 14.500)" d="M.02 1L.36 0L.7 1M.14 .66H.58"/><path vector-effect="non-scaling-stroke" transform="translate(1052.07 215.60) scale(12.083 14.500)" d="M.05 0H.65L.3 1"/><path vector-effect="non-scaling-stroke" transform="translate(1061.99 215.60) scale(12.083 14.500)" d="M.13 .92V1"/><path vector-effect="non-scaling-stroke" transform="translate(1067.32 215.60) scale(12.083 14.500)" d="M.36 0C.13 0 .06 .25 .06 .5C.06 .75 .13 1 .36 1C.59 1 .66 .75 .66 .5C.66 .25 .59 0 .36 0Z"/><path vector-effect="non-scaling-stroke" transform="translate(1077.54 215.60) scale(12.083 14.500)" d="M.12 .2L.36 0V1"/><path vector-effect="non-scaling-stroke" transform="translate(1085.87 215.60) scale(12.083 14.500)" d="M.13 .92V1"/><path vector-effect="non-scaling-stroke" transform="translate(1091.06 215.60) scale(12.083 14.500)" d="M.12 .2L.36 0V1"/></g><circle cx="1212" cy="147.3" r="29.1" fill="none" stroke="#151515" stroke-width="1.1"/><circle cx="1212" cy="446" r="29.1" fill="none" stroke="#151515" stroke-width="1.1"/><g fill="none" stroke="#111" stroke-width="1.2" stroke-linecap="round" stroke-linejoin="round" vector-effect="non-scaling-stroke"><path vector-effect="non-scaling-stroke" transform="translate(1206.79 135.80) scale(15.032 23.000)" d="M.08 0V1M.66 0V1M.08 .48H.66"/></g><g fill="none" stroke="#111" stroke-width="1.2" stroke-linecap="round" stroke-linejoin="round" vector-effect="non-scaling-stroke"><path vector-effect="non-scaling-stroke" transform="translate(1207.51 434.50) scale(12.871 23.000)" d="M.5 0V.75C.5 .92 .42 1 .28 1C.14 1 .06 .92 .06 .75"/></g><path d="M1140.7 139.700V660" fill="none" stroke="#151515" stroke-width="1"/><path d="M1137.4 143.2L1144.3 151M1137.4 442L1144.3 449.800" fill="none" stroke="#151515" stroke-width="1.8"/><g transform="rotate(-90 1135.6 320.6)"><g fill="none" stroke="#111" stroke-width="1.1" stroke-linecap="round" stroke-linejoin="round" vector-effect="non-scaling-stroke"><path vector-effect="non-scaling-stroke" transform="translate(1136.37 305.30) scale(11.184 15.300)" d="M.07 .25C.07 .08 .2 0 .36 0C.53 0 .64 .1 .64 .25C.64 .4 .55 .5 .4 .65L.05 1H.66"/><path vector-effect="non-scaling-stroke" transform="translate(1145.95 305.30) scale(11.184 15.300)" d="M.36 0C.13 0 .06 .25 .06 .5C.06 .75 .13 1 .36 1C.59 1 .66 .75 .66 .5C.66 .25 .59 0 .36 0Z"/><path vector-effect="non-scaling-stroke" transform="translate(1155.05 305.30) scale(11.184 15.300)" d="M.13 0L.1 .24"/><path vector-effect="non-scaling-stroke" transform="translate(1158.98 305.30) scale(11.184 15.300)" d="M.08 .55H.6"/><path vector-effect="non-scaling-stroke" transform="translate(1168.32 305.30) scale(11.184 15.300)" d="M.35 0C.2 0 .1 .09 .1 .23C.1 .38 .2 .46 .35 .46C.5 .46 .6 .38 .6 .23C.6 .09 .5 0 .35 0ZM.35 .46C.17 .46 .05 .56 .05 .73C.05 .9 .17 1 .35 1C.53 1 .65 .9 .65 .73C.65 .56 .53 .46 .35 .46Z"/><path vector-effect="non-scaling-stroke" transform="translate(1177.61 305.30) scale(11.184 15.300)" d="M.11 0L.08 .24M.3 0L.27 .24"/></g></g><g transform="rotate(-90 1135.6 667)"><g fill="none" stroke="#111" stroke-width="1.1" stroke-linecap="round" stroke-linejoin="round" vector-effect="non-scaling-stroke"><path vector-effect="non-scaling-stroke" transform="translate(1136.46 651.70) scale(12.600 15.300)" d="M.07 .25C.07 .08 .2 0 .36 0C.53 0 .64 .1 .64 .25C.64 .4 .55 .5 .4 .65L.05 1H.66"/><path vector-effect="non-scaling-stroke" transform="translate(1147.26 651.70) scale(12.600 15.300)" d="M.6 .14C.56 .05 .48 0 .38 0C.18 0 .06 .2 .06 .55C.06 .85 .18 1 .36 1C.52 1 .64 .87 .64 .7C.64 .52 .52 .4 .36 .4C.2 .4 .06 .52 .06 .7"/><path vector-effect="non-scaling-stroke" transform="translate(1157.51 651.70) scale(12.600 15.300)" d="M.13 0L.1 .24"/><path vector-effect="non-scaling-stroke" transform="translate(1161.94 651.70) scale(12.600 15.300)" d="M.08 .55H.6"/><path vector-effect="non-scaling-stroke" transform="translate(1172.49 651.70) scale(12.600 15.300)" d="M.5 1V0L.03 .68H.68"/><path vector-effect="non-scaling-stroke" transform="translate(1183.23 651.70) scale(12.600 15.300)" d="M.11 0L.08 .24M.3 0L.27 .24"/></g></g><rect x="1292.5" y="116" width="6.3" height="544" fill="#000"/><path d="M1298.8 241.2H1362" fill="none" stroke="#151515" stroke-width="1"/><g fill="none" stroke="#111" stroke-width="1" stroke-linecap="round" stroke-linejoin="round" vector-effect="non-scaling-stroke"><path vector-effect="non-scaling-stroke" transform="translate(1317.89 256.40) scale(9.522 11.500)" d="M.15 0V1"/><path vector-effect="non-scaling-stroke" transform="translate(1321.88 256.40) scale(9.522 11.500)" d="M.62 .15C.56 .05 .46 0 .34 0C.18 0 .07 .09 .07 .24C.07 .4 .18 .45 .34 .5C.52 .55 .64 .6 .64 .76C.64 .91 .52 1 .35 1C.2 1 .1 .95 .04 .84"/><path vector-effect="non-scaling-stroke" transform="translate(1330.04 256.40) scale(9.522 11.500)" d="M.62 .15C.56 .05 .46 0 .34 0C.18 0 .07 .09 .07 .24C.07 .4 .18 .45 .34 .5C.52 .55 .64 .6 .64 .76C.64 .91 .52 1 .35 1C.2 1 .1 .95 .04 .84"/><path vector-effect="non-scaling-stroke" transform="translate(1338.22 256.40) scale(9.522 11.500)" d="M.08 0V.7C.08 .9 .2 1 .36 1C.52 1 .64 .9 .64 .7V0"/><path vector-effect="non-scaling-stroke" transform="translate(1346.61 256.40) scale(9.522 11.500)" d="M.02 1L.36 0L.7 1M.14 .66H.58"/><path vector-effect="non-scaling-stroke" transform="translate(1355.00 256.40) scale(9.522 11.500)" d="M.08 1V0L.64 1V0"/><path vector-effect="non-scaling-stroke" transform="translate(1363.37 256.40) scale(9.522 11.500)" d="M.64 .2C.58 .07 .48 0 .36 0C.16 0 .06 .2 .06 .5C.06 .8 .16 1 .36 1C.48 1 .58 .93 .64 .8"/><path vector-effect="non-scaling-stroke" transform="translate(1371.47 256.40) scale(9.522 11.500)" d="M.58 0H.08V1H.58M.08 .48H.46"/></g><path d="M1318.6 284.5H1362M1318.6 313.4H1362M1318.6 342.3H1362M1318.6 371.2H1362M1318.6 400.1H1362M1318.6 429.0H1362M1318.6 457.9H1362M1318.6 486.8H1362M1318.6 515.7H1362M1318.6 544.6H1362M1318.6 573.5H1362M1318.6 602.4H1362M1318.6 631.3H1362" fill="none" stroke="#151515" stroke-width="1"/><path d="M1337.3 368L1318.9 400H1355.700Z" fill="#fff" stroke="#151515" stroke-width="1"/><g fill="none" stroke="#111" stroke-width="1" stroke-linecap="round" stroke-linejoin="round" vector-effect="non-scaling-stroke"><path vector-effect="non-scaling-stroke" transform="translate(1333.30 382.50) scale(11.351 12.200)" d="M.02 1L.36 0L.7 1M.14 .66H.58"/></g><path d="M834.2 306.4H949.6V578.9H884.4V585.6M834.2 306.4V578.2M805.3 578.2H842.2" fill="none" stroke="#151515" stroke-width="1.1"/><path d="M882.2 253.3V306.4M885.1 253.3V306.4M882.2 253.3H885.1M925.9 297V306.4" fill="none" stroke="#151515" stroke-width="1"/><path d="M883.5 253.4A43.7 43.7 0 0 1 925.9 297" fill="none" stroke="#151515" stroke-width="1"/><path d="M842.2 535.1V585.6M844.1 535.1V585.6M842.2 535.1H844.1" fill="none" stroke="#151515" stroke-width="1"/><path d="M843 535.2A43 43 0 0 1 884.4 578.2" fill="none" stroke="#151515" stroke-width="1"/><path d="M946.7 343.7V505.1M948.2 343.7V505.1M946.7 343.7H949.6M946.7 505.1H949.6" fill="none" stroke="#151515" stroke-width="1"/><path d="M834.2 356.4H837.6" fill="none" stroke="#151515" stroke-width="2"/><path d="M837.6 356.4V409.8" fill="none" stroke="#151515" stroke-width="1.8" stroke-dasharray="9 3"/><path d="M888.3 366.5H896V495.6H888.3Z" fill="none" stroke="#151515" stroke-width="1.2"/><path d="M890.4 371.5V493M894 371.5V493M888.3 371.5H896" fill="none" stroke="#151515" stroke-width="0.9"/><path d="M888.3 495.3H896" fill="none" stroke="#151515" stroke-width="2"/><path d="M896 371.5H946.7M896 384.8H946.7M896 398.1H946.7M896 411.4H946.7M896 424.7H946.7M896 438.0H946.7M896 451.3H946.7M896 464.6H946.7M896 477.9H946.7" fill="none" stroke="#151515" stroke-width="1.1"/><path d="M837.6 371.5H888.3M837.6 384.8H888.3M837.6 398.1H888.3M837.6 411.4H888.3" fill="none" stroke="#151515" stroke-width="1.1" stroke-dasharray="6.5 3"/><path d="M852 424.7H888.3M865.6 438H888.3" fill="none" stroke="#151515" stroke-width="1.1" stroke-dasharray="6.5 3"/><path d="M834.2 406L888.3 466" fill="none" stroke="#151515" stroke-width="1.1" stroke-dasharray="7 3"/><path d="M959.3 585.6H1059.3M921.1 585.6V660M930.4 585.6V660M1059.3 571.4V630L1047.3 631.5L1069.1 640.7L1059.3 643V660" fill="none" stroke="#151515" stroke-width="1"/><path d="M930.4 590.7H973.3M930.4 593H973.3M973.3 590.7V593" fill="none" stroke="#151515" stroke-width="1"/><path d="M973.3 593A43 43 0 0 1 930.4 635.8" fill="none" stroke="#151515" stroke-width="1"/><path d="M930.4 635.8A43 43 0 0 1 973 672" fill="none" stroke="#151515" stroke-width="1"/><path d="M750 600.700H805.5V585.6" fill="none" stroke="#151515" stroke-width="1"/></g></svg>
<!-- 35_markups -->
<svg width="1920" height="1080" viewBox="0 0 1920 1080"><g clip-path="url(#cv)"><path d="M560.8 158.2L788.7 156.8L785.2 403.7H645.3L647.6 564.2H560.8Z" fill="none" stroke="#e51b1b" stroke-width="1.6"/><path d="M576.8 173V247.2M576.8 315V390" stroke="#e51b1b" stroke-width="1.6"/><path d="M576.8 160.5L585 174.300H568.6ZM576.8 402.6L585 388.800H568.6Z" fill="#f00"/><rect x="796.3" y="287.7" width="172.800" height="306.300" fill="none" stroke="#b9b9ea" stroke-width="1" stroke-dasharray="2 2.500"/><path d="M882.6 264V297M885.1 475V497.800" stroke="#b9b9ea" stroke-width="1" stroke-dasharray="2 2"/><rect x="805.3" y="297.1" width="154.100" height="288.500" fill="none" stroke="#e51b1b" stroke-width="1.7"/><circle cx="805.3" cy="297.1" r="4.1" fill="#bab13c" stroke="#7c7a22" stroke-width=".9"/><circle cx="959.4" cy="297.1" r="4.1" fill="#bab13c" stroke="#7c7a22" stroke-width=".9"/><circle cx="805.3" cy="585.6" r="4.1" fill="#bab13c" stroke="#7c7a22" stroke-width=".9"/><circle cx="959.4" cy="585.6" r="4.1" fill="#bab13c" stroke="#7c7a22" stroke-width=".9"/><circle cx="882.4" cy="264" r="4.1" fill="#f7a11c" stroke="#b97a1a" stroke-width=".9"/><circle cx="885.1" cy="475.1" r="4.1" fill="#f7a11c" stroke="#b97a1a" stroke-width=".9"/></g></svg>
<div class="t" style="top:368.36px;font-size:18px;color:#e51b1b;left:628.90px;transform:scaleX(1.0478);transform-origin:0 50%;">37 sq yd</div>
<div class="t" style="top:503.16px;font-size:18px;color:#e51b1b;left:849.30px;transform:scaleX(1.0655);transform-origin:0 50%;">32 cu yd</div>
<div class="t" style="left:537.8px;top:272px;width:80px;height:18px;font-size:18px;color:#e51b1b;text-align:center;transform:rotate(-90deg) scaleX(1.11);">16'-11"</div>
<!-- 40_nav -->
<svg width="1920" height="1080" viewBox="0 0 1920 1080"><path d="M1368 111.500l4.500-4.500l4.500 4.500" fill="none" stroke="#555" stroke-width="1.800"/><rect x="1363" y="438" width="20" height="79.500" fill="#cdcdcd"/><path d="M1368 645.500l4.500 4.500l4.500-4.500" fill="none" stroke="#555" stroke-width="1.800"/><path d="M19 665.500l-4.500 4.500l4.500 4.500" fill="none" stroke="#555" stroke-width="1.800"/><rect x="856" y="661" width="370.500" height="18.500" fill="#cdcdcd"/><path d="M1349 665.500l4.500 4.500l-4.500 4.500" fill="none" stroke="#555" stroke-width="1.800"/><rect x="1362" y="659.500" width="21" height="20.500" fill="#222"/><path d="M1367 662h8.500l4.500 4.500v11.500h-13z" fill="#fff"/><path d="M1375.500 662v4.500h4.500" fill="#ddd" stroke="#888" stroke-width=".6"/><path d="M1374 674.700h8M1378 670.700v8" stroke="#6fbf3a" stroke-width="2.200"/><defs><clipPath id="lc"><rect x="0" y="370" width="14" height="40"/></clipPath><clipPath id="rc"><rect x="1370" y="370" width="20" height="40"/></clipPath><clipPath id="bc"><rect x="675" y="695" width="40" height="19.700"/></clipPath></defs><circle cx="0" cy="390" r="14" fill="#0a84dc" clip-path="url(#lc)"/><circle cx="7" cy="390" r="3.5" fill="#fff"/><circle cx="1390" cy="390" r="14" fill="#0a84dc" clip-path="url(#rc)"/><circle cx="1383" cy="390" r="3.5" fill="#fff"/><circle cx="695" cy="714.700" r="14" fill="#0a84dc" clip-path="url(#bc)"/><circle cx="695" cy="708" r="3.5" fill="#fff"/><path d="M8.500 708.300l4.500 3l-4.500 3z" fill="#fff"/><path d="M1373 708.300l4.500 3l-4.500 3z" fill="#fff"/><rect x="10.500" y="684.700" width="17" height="16.500" fill="#a8a8a8"/><rect x="10.500" y="684.700" width="5.500" height="16.500" fill="#787878"/><path d="M18.500 689.500l6 6.500M24.500 689.500l-6 6.500" stroke="#6a6a6a" stroke-width="1.800"/><rect x="34.500" y="684.700" width="17" height="16.500" fill="#fff" stroke="#111" stroke-width=".8"/><rect x="35" y="685" width="5.500" height="16" fill="#1b84d3"/><path d="M40 691.500h5v-3.300l5.500 4.800l-5.500 4.800v-3.300h-5z" fill="#1b84d3"/><rect x="58.500" y="684.700" width="17" height="16.500" fill="#fff" stroke="#111" stroke-width=".8"/><rect x="59" y="685" width="16" height="4.800" fill="#1b84d3"/><path d="M65.500 689.500h3v4h3.300l-4.800 5.500l-4.800-5.500h3.300z" fill="#1b84d3"/><rect x="107" y="683.500" width="15" height="18.500" fill="#fff" stroke="#1b84d3" stroke-width="1"/><path d="M114.500 685l2.500 3h-1.800v3h3v-1.800l3 2.500l-3 2.500v-1.800h-3v3h1.800l-2.500 3l-2.500-3h1.800v-3h-3v1.800l-3-2.500l3-2.500v1.800h3v-3h-1.800z" fill="#1b84d3"/><rect x="130.500" y="683.500" width="14.500" height="8.500" fill="#fff"/><rect x="130.500" y="693" width="14.500" height="9" fill="#fff"/><path d="M131 697.500l3-2.800v1.900h7v-1.900l3 2.800l-3 2.800v-1.900h-7v1.900z" fill="#1b84d3"/><rect x="130.500" y="692" width="14.500" height="1.200" fill="#1b84d3"/><rect x="474.500" y="681.500" width="23.200" height="22.700" fill="#2d2d2d" stroke="#2377bb" stroke-width="1"/><path d="M481.500 694.500l-2.500-3.500c-.8-1.200.6-2.200 1.500-1.200l1.800 2v-6c0-1.300 1.700-1.300 1.800 0l.2 4.500l.3-6c.1-1.300 1.800-1.300 1.800 0l.1 6l.6-5.300c.2-1.200 1.800-1.100 1.700.2l-.3 5.600l1-3.800c.3-1.100 1.800-.8 1.600.4l-1 5.600c-.4 2.500-1 5-1.500 6.500h-6z" fill="#fff" stroke="#111" stroke-width=".5"/><path d="M506 686v14.500l3.400-3l2.400 5.400l2.300-1l-2.400-5.300h4.600z" fill="#fff" stroke="#000" stroke-width=".9"/><path d="M534.500 694.500l7 6.500" stroke="#3a90dc" stroke-width="3.600" stroke-linecap="round"/><circle cx="530.500" cy="690.500" r="5.300" fill="#dceaf5" stroke="#b8c4cc" stroke-width="1.400"/><path d="M550 685.500h5M550 701.500h5M552.500 685.500v16" stroke="#1b84d3" stroke-width="1.400" fill="none"/><path d="M556.500 701.500l5-15.500h1.500l5 15.500h-2l-1.300-4.300h-5l-1.300 4.300zM560.300 695.500h3.900l-1.950-6.300z" fill="#1b84d3"/><rect x="572" y="684" width="74.500" height="20.500" fill="#fff"/><rect x="631" y="685" width="14.500" height="18.500" fill="#a9adb3"/><path d="M635.200 692.700h6l-3 3.200z" fill="#111"/><rect x="677" y="685.500" width="2.500" height="15" fill="#7a7a7a"/><path d="M690.500 685.500v15l-10.500-7.500z" fill="#7a7a7a"/><path d="M714 685.500v15l-10.500-7.500z" fill="#7a7a7a"/><rect x="721" y="684" width="100" height="20.500" fill="#fff"/><path d="M828.500 685.500v15l10.500-7.500z" fill="#7a7a7a"/><path d="M852 685.500v15l10.500-7.500z" fill="#7a7a7a"/><rect x="863" y="685.500" width="2.500" height="15" fill="#7a7a7a"/><rect x="873" y="685" width="1.300" height="17.500" fill="#d8d8d8"/><circle cx="888" cy="693" r="8" fill="#1b84d3"/><path d="M891.500 688.500v9l-7-4.500z" fill="#10202e"/><circle cx="911.800" cy="693" r="8" fill="#7a7a7a"/><path d="M908.800 688.500v9l7-4.500z" fill="#1e1e1e"/><defs><linearGradient id="og" x1="0" y1="0" x2="0" y2="1"><stop offset="0" stop-color="#f9a21e"/><stop offset="1" stop-color="#f07a1a"/></linearGradient></defs><path d="M1260 684l7.500 9.500h-4.700v8.800h-5.600v-8.800h-4.700z" fill="url(#og)"/><path d="M1276.500 702.500c0-5 2.500-8.500 7.500-8.500s7.500 3.500 7.500 8.500z" fill="#1b84d3"/><path d="M1280 694l4 4.500l4-4.500z" fill="#fff"/><circle cx="1284" cy="688.500" r="5.300" fill="#e9c8ae"/><path d="M1299.7 692.0h5.4l-2.7 3z" fill="#fff"/><path d="M1316.500 697c-1.500-2-2.900-4-2.900-6.800c0-3.500 2.800-6 6.200-6s6.200 2.500 6.200 6c0 2.800-1.400 4.800-2.900 6.800z" fill="#f6ea2c"/><rect x="1317" y="697.500" width="5.600" height="2.200" fill="#c9c9c9"/><rect x="1317.800" y="700" width="4" height="2" fill="#8a8a8a"/><path d="M1335.7 692.0h5.4l-2.7 3z" fill="#fff"/><path d="M1356.500 692v-2.500c0-5.500 8.500-5.500 8.500 0v3" fill="none" stroke="#f0b428" stroke-width="2"/><rect x="1346.700" y="691.500" width="14.500" height="10.500" rx="1.200" fill="#f2b830"/><path d="M1371.8 692.0h5.4l-2.7 3z" fill="#fff"/></svg>
<div class="t" style="top:688.44px;font-size:12px;color:#222;left:576.00px;transform:scaleX(0.8723);transform-origin:0 50%;">96.36%</div>
<div class="t" style="top:688.44px;font-size:12px;color:#222;left:728.31px;transform:scaleX(0.8783);transform-origin:50% 50%;">A 2.01.2 (1 of 1)</div>
<!-- 50_list -->
<div class="a" style="left:0px;top:720px;width:26px;height:30px;background:#222;"></div>
<div class="a" style="left:0px;top:718px;width:28px;height:2px;background:#1b84d3;"></div>
<div class="a" style="left:26px;top:714px;width:2px;height:6px;background:#1b84d3;"></div>
<div class="a" style="left:0px;top:750px;width:28px;height:2px;background:#1b84d3;"></div>
<div class="a" style="left:26px;top:750px;width:2px;height:256px;background:#1b84d3;"></div>
<div class="a" style="left:28px;top:742px;width:277.4px;height:22px;background:#0a84dc;"></div>
<div class="a" style="left:305.4px;top:762.3px;width:1077.6px;height:1.8px;background:#1b7fd0;"></div>
<div class="a" style="left:28px;top:874px;width:1355px;height:21.6px;background:#0a84dc;"></div>
<div class="a" style="left:28px;top:807.8px;width:1355px;height:2px;background:#5c5c5c;"></div>
<div class="a" style="left:28px;top:852px;width:1355px;height:2px;background:#5c5c5c;"></div>
<div class="a" style="left:304.9px;top:742px;width:0;height:243px;border-left:1px dotted #6a6a6a"></div>
<div class="a" style="left:523.0px;top:742px;width:0;height:243px;border-left:1px dotted #6a6a6a"></div>
<div class="a" style="left:602.9px;top:742px;width:0;height:243px;border-left:1px dotted #6a6a6a"></div>
<div class="a" style="left:652.8px;top:742px;width:0;height:243px;border-left:1px dotted #6a6a6a"></div>
<div class="a" style="left:732.5px;top:742px;width:0;height:243px;border-left:1px dotted #6a6a6a"></div>
<div class="a" style="left:812.7px;top:742px;width:0;height:243px;border-left:1px dotted #6a6a6a"></div>
<div class="a" style="left:944.7px;top:742px;width:0;height:243px;border-left:1px dotted #6a6a6a"></div>
<div class="a" style="left:1024.9px;top:742px;width:0;height:243px;border-left:1px dotted #6a6a6a"></div>
<div class="a" style="left:1105.1px;top:742px;width:0;height:243px;border-left:1px dotted #6a6a6a"></div>
<div class="a" style="left:1359.5px;top:742px;width:0;height:243px;border-left:1px dotted #6a6a6a"></div>
<div class="a" style="left:28px;top:985px;width:1355px;height:21px;background:#f0f0f0;"></div>
<div class="a" style="left:48.5px;top:986px;width:1175.5px;height:19px;background:#cdcdcd;"></div>
<svg width="1920" height="1080" viewBox="0 0 1920 1080"><path d="M39.500 991l-4.500 4.500l4.500 4.500" fill="none" stroke="#555" stroke-width="1.800"/><path d="M1369.500 991l4.500 4.500l-4.500 4.500" fill="none" stroke="#555" stroke-width="1.800"/><path d="M5.600 743l12.800-15.800c1.600-1.800 4.800.5 3.400 2.500l-12.200 16.200l-4.600 1.600z" fill="#e8242c"/><path d="M35 728.500h10M40 723.500v10" stroke="#1b84d3" stroke-width="2.200"/><path d="M59 728.500h10" stroke="#1a69a8" stroke-width="2.200"/><rect x="78.800" y="720.500" width="1.200" height="16.500" fill="#cfcfcf"/><rect x="133" y="720.500" width="1.200" height="16.500" fill="#cfcfcf"/><path d="M88.500 732.500h11l-5.500-7.500z" fill="#1b84d3"/><path d="M112.500 725h11l-5.500 7.500z" fill="#6e6e6e"/><defs><linearGradient id="fg" x1="0" y1="0" x2="1" y2="0"><stop offset="0" stop-color="#1a74c4"/><stop offset=".5" stop-color="#49a6ee"/><stop offset="1" stop-color="#1a74c4"/></linearGradient><linearGradient id="tg2" x1="0" y1="0" x2="1" y2="0"><stop offset="0" stop-color="#6e6e6e"/><stop offset=".5" stop-color="#a8a8a8"/><stop offset="1" stop-color="#6a6a6a"/></linearGradient></defs><path d="M139.800 720.500c3-1.500 13-1.500 16 0l-6 7.500v7l-4 1.500v-8.500z" fill="url(#fg)"/><path d="M205.500 721.500h17l-2 15h-13z" fill="url(#tg2)"/><ellipse cx="214" cy="721.500" rx="8.500" ry="2.300" fill="#8f8f8f" stroke="#b5b5b5" stroke-width=".8"/><circle cx="238" cy="728.500" r="6.300" fill="none" stroke="#e8242c" stroke-width="2"/><path d="M230.500 736.500l15-16" stroke="#e8242c" stroke-width="2"/><rect x="251" y="719" width="100.300" height="19" fill="#fff"/><circle cx="260" cy="726.500" r="2.800" fill="none" stroke="#555" stroke-width="1.500"/><path d="M262 728.800l4 4" stroke="#555" stroke-width="2"/><rect x="355" y="720.500" width="1.200" height="16.500" fill="#cfcfcf"/><rect x="361.500" y="720" width="17.500" height="17" fill="#fff" stroke="#2a7fc8" stroke-width="1"/><rect x="362" y="720.500" width="16.500" height="4" fill="#2a7fc8"/><path d="M366 724.500v12M370.300 724.500v12M374.600 724.500v12" stroke="#2a7fc8" stroke-width="1.300"/><path d="M447.7 727.3h5.4l-2.7 3z" fill="#fff"/><rect x="467" y="719.8" width="4" height="17.0" rx=".8" fill="#3a90dc" transform="rotate(0 469 728.3)"/><rect x="467" y="719.8" width="4" height="17.0" rx=".8" fill="#3a90dc" transform="rotate(45 469 728.3)"/><rect x="467" y="719.8" width="4" height="17.0" rx=".8" fill="#3a90dc" transform="rotate(90 469 728.3)"/><rect x="467" y="719.8" width="4" height="17.0" rx=".8" fill="#3a90dc" transform="rotate(135 469 728.3)"/><circle cx="469" cy="728.3" r="6.1" fill="#3a90dc"/><circle cx="469" cy="728.3" r="3.1" fill="#222"/><rect x="484.300" y="720.500" width="1.200" height="16.500" fill="#cfcfcf"/><path d="M492.500 722.500h3.400l2.900 3.800l2.900-3.800h3.400l-4.600 5.900l4.600 5.900h-3.400l-2.900-3.800l-2.900 3.800h-3.400l4.600-5.900z" fill="#e81123"/><path d="M514 721v5.500c0 2.500 1.500 4 4 4h6.500v3.500l7-5.500l-7-5.500v3.500h-5.500c-1 0-1.500-.5-1.500-1.500v-4z" fill="#5bb531"/><rect x="541.500" y="719" width="11.500" height="18" rx="3.500" fill="#4a4a4a" stroke="#8a8a8a" stroke-width=".8"/><circle cx="547.200" cy="723" r="2.300" fill="#e8242c"/><circle cx="547.200" cy="728.200" r="2.300" fill="#f2d21c"/><circle cx="547.200" cy="733.300" r="2.300" fill="#4caf28"/><path d="M558.5999999999999 727.3h5.4l-2.7 3z" fill="#fff"/><rect x="577.8" y="719.8" width="4" height="17.0" rx=".8" fill="#3a90dc" transform="rotate(0 579.8 728.3)"/><rect x="577.8" y="719.8" width="4" height="17.0" rx=".8" fill="#3a90dc" transform="rotate(45 579.8 728.3)"/><rect x="577.8" y="719.8" width="4" height="17.0" rx=".8" fill="#3a90dc" transform="rotate(90 579.8 728.3)"/><rect x="577.8" y="719.8" width="4" height="17.0" rx=".8" fill="#3a90dc" transform="rotate(135 579.8 728.3)"/><circle cx="579.8" cy="728.3" r="6.1" fill="#3a90dc"/><circle cx="579.8" cy="728.3" r="3.1" fill="#222"/><path d="M597 728.500l4.500 4.500l9.500-11" fill="none" stroke="#f59a23" stroke-width="2.800"/><path d="M615.5999999999999 727.3h5.4l-2.7 3z" fill="#fff"/><rect x="628" y="720.500" width="1.200" height="16.500" fill="#cfcfcf"/><path d="M634 722v12c0 3 12 3 12 0v-12z" fill="#2a80cc"/><ellipse cx="640" cy="722" rx="6" ry="2.300" fill="#6db3ee"/><path d="M634 726.500c0 3 12 3 12 0M634 730.500c0 3 12 3 12 0" fill="none" stroke="#9fcdf3" stroke-width=".9"/><path d="M641.500 730h4v-3h4v3h3.500l-5.700 7z" fill="#5bb531"/><path d="M659 719.500h8.500l4.500 4.500v13h-13z" fill="#fff"/><path d="M667.500 719.500v4.500h4.500" fill="#ddd" stroke="#999" stroke-width=".6"/><path d="M663.500 729.500h6v-3l6.500 4.800l-6.500 4.800v-3h-6z" fill="#f59a23"/><g fill="#1b84d3"><rect x="683.300" y="721.500" width="3" height="2.600"/><rect x="683.300" y="727.200" width="3" height="2.600"/><rect x="683.300" y="732.900" width="3" height="2.600"/><rect x="688.500" y="721.800" width="10.500" height="2"/><rect x="688.500" y="727.500" width="10.500" height="2"/><rect x="688.500" y="733.200" width="10.500" height="2"/></g><path d="M773.5999999999999 727.3h5.4l-2.7 3z" fill="#fff"/><path d="M289.800 755.300h6.600l-3.300-5.500z" fill="none" stroke="#fff" stroke-width="1"/><path d="M40 774.3h7.200l-3.600 4.200z" fill="#fff"/><path d="M40 818.1h7.200l-3.600 4.200z" fill="#fff"/><path d="M40 861.9h7.200l-3.600 4.200z" fill="#fff"/><g transform="translate(84.5 788) scale(1)"><path d="M2.100 1l7.900-1.300l2 2.300l3-2.200l3.100 3l-4 15.700l-13.400-5.600z" fill="#f3ecff" stroke="#a98ad6" stroke-width=".9"/><text x="3.600" y="10.800" font-family="Liberation Sans,sans-serif" font-weight="bold" font-style="italic" font-size="8.500" fill="#5a2d91" transform="rotate(14 4 11)">ft²</text></g><g transform="translate(84.5 832.5) scale(1)"><path d="M3 15.500L16 4.500" stroke="#8a63b8" stroke-width="1.500"/><path d="M.8 12.500l4.200 5M14 1.500l4.200 5" stroke="#8a63b8" stroke-width="1.700"/><text x="2.500" y="9.500" font-family="Liberation Sans,sans-serif" font-weight="bold" font-size="8.500" fill="#8a63b8" transform="rotate(-40 2.500 9.500)">8&apos;&apos;</text></g><g transform="translate(84.5 876.5) scale(1)"><defs><linearGradient id="vg84_876" x1="0" y1="0" x2="0" y2="1"><stop offset="0" stop-color="#9fc0f0"/><stop offset="1" stop-color="#eef4ff"/></linearGradient></defs><path d="M1.500 16.500v-5l4-3.500h11.500v5l-4 3.500z" fill="url(#vg84_876)"/><path d="M1.500 6l4-4.500h11.500v11.500l-4 3.500h-11.500zM1.500 6h11.500v10.500M13 6l4-4.500M5.500 1.500v11l-4 4M5.500 12.500h11.500" fill="none" stroke="#8a63b8" stroke-width="1.100"/></g></svg>
<div class="t" style="top:722.23px;font-size:14.5px;color:#f4f4f4;left:162.30px;transform:scaleX(1.0055);transform-origin:0 50%;">Filter</div>
<div class="t" style="top:723.04px;font-size:12px;color:#777;left:271.00px;transform:scaleX(0.8416);transform-origin:0 50%;">Search</div>
<div class="t" style="top:722.23px;font-size:14.5px;color:#f4f4f4;left:384.50px;transform:scaleX(0.9875);transform-origin:0 50%;">Columns</div>
<div class="t" style="top:722.33px;font-size:14.5px;color:#f4f4f4;left:705.50px;transform:scaleX(0.9801);transform-origin:0 50%;">Summary</div>
<div class="t" style="top:745.89px;font-size:13.6px;color:#fff;font-weight:bold;left:31.70px;transform:scaleX(1.0627);transform-origin:0 50%;">Subject</div>
<div class="t" style="top:745.89px;font-size:13.6px;color:#fff;font-weight:bold;left:308.50px;transform:scaleX(1.0174);transform-origin:0 50%;">Comments</div>
<div class="t" style="top:745.89px;font-size:13.6px;color:#fff;font-weight:bold;left:526.00px;transform:scaleX(1.0061);transform-origin:0 50%;">Length</div>
<div class="t" style="top:745.89px;font-size:13.6px;color:#fff;font-weight:bold;left:606.30px;transform:scaleX(1.0981);transform-origin:0 50%;">Mea...</div>
<div class="t" style="top:745.89px;font-size:13.6px;color:#fff;font-weight:bold;left:656.20px;transform:scaleX(1.0846);transform-origin:0 50%;">Area</div>
<div class="t" style="top:745.89px;font-size:13.6px;color:#fff;font-weight:bold;left:735.60px;transform:scaleX(1.1235);transform-origin:0 50%;">Wall Area</div>
<div class="t" style="top:745.89px;font-size:13.6px;color:#fff;font-weight:bold;left:816.10px;transform:scaleX(1.1106);transform-origin:0 50%;">Space</div>
<div class="t" style="top:745.89px;font-size:13.6px;color:#fff;font-weight:bold;left:948.10px;transform:scaleX(1.0767);transform-origin:0 50%;">Volume</div>
<div class="t" style="top:745.89px;font-size:13.6px;color:#fff;font-weight:bold;left:1028.30px;transform:scaleX(1.0109);transform-origin:0 50%;">Count</div>
<div class="t" style="top:745.89px;font-size:13.6px;color:#fff;font-weight:bold;left:1108.50px;transform:scaleX(1.0597);transform-origin:0 50%;">Responsibility</div>
<div class="a" style="left:1363.3px;top:742px;width:19.7px;height:20px;overflow:hidden"><div class="t" style="top:3.89px;font-size:13.6px;color:#fff;font-weight:bold;left:0.00px;transform:scaleX(1.0698);transform-origin:0 50%;">Label</div></div>
<div class="t" style="top:767.82px;font-size:13.8px;color:#fff;font-weight:bold;left:59.10px;transform:scaleX(1.0549);transform-origin:0 50%;">Area Measurement (1)</div>
<div class="t" style="top:811.52px;font-size:13.8px;color:#fff;font-weight:bold;left:59.10px;transform:scaleX(1.0333);transform-origin:0 50%;">Length Measurement (1)</div>
<div class="t" style="top:856.02px;font-size:13.8px;color:#fff;font-weight:bold;left:59.10px;transform:scaleX(1.0535);transform-origin:0 50%;">Volume Measurement (1)</div>
<div class="t" style="top:789.97px;font-size:13.5px;color:#f4f4f4;left:107.10px;transform:scaleX(0.9956);transform-origin:0 50%;">Area Measurement</div>
<div class="t" style="top:789.97px;font-size:13.5px;color:#f4f4f4;left:308.50px;transform:scaleX(0.9699);transform-origin:0 50%;">37 sq yd</div>
<div class="t" style="top:833.77px;font-size:13.5px;color:#f4f4f4;left:107.10px;transform:scaleX(0.9861);transform-origin:0 50%;">Length Measurement</div>
<div class="t" style="top:833.77px;font-size:13.5px;color:#f4f4f4;left:308.50px;transform:scaleX(0.9732);transform-origin:0 50%;">16&#x27;-11&quot;</div>
<div class="t" style="top:877.57px;font-size:13.5px;color:#f4f4f4;left:107.10px;transform:scaleX(1.0052);transform-origin:0 50%;">Volume Measurement</div>
<div class="t" style="top:877.57px;font-size:13.5px;color:#f4f4f4;left:308.50px;transform:scaleX(0.9582);transform-origin:0 50%;">32 cu yd</div>
<div class="t" style="top:767.92px;font-size:13.8px;color:#fff;font-weight:bold;left:565.47px;transform:scaleX(1.0300);transform-origin:100% 50%;">87.67</div>
<div class="t" style="top:767.92px;font-size:13.8px;color:#fff;font-weight:bold;left:634.65px;transform:scaleX(1.0300);transform-origin:100% 50%;">37</div>
<div class="t" style="top:767.92px;font-size:13.8px;color:#fff;font-weight:bold;left:715.05px;transform:scaleX(1.0300);transform-origin:100% 50%;">37</div>
<div class="t" style="top:767.92px;font-size:13.8px;color:#fff;font-weight:bold;left:802.93px;transform:scaleX(1.0300);transform-origin:100% 50%;">3</div>
<div class="t" style="top:767.92px;font-size:13.8px;color:#fff;font-weight:bold;left:1014.33px;transform:scaleX(1.0300);transform-origin:100% 50%;">4</div>
<div class="t" style="top:790.07px;font-size:13.5px;color:#f4f4f4;left:565.72px;transform:scaleX(0.9400);transform-origin:100% 50%;">87.67</div>
<div class="t" style="top:790.07px;font-size:13.5px;color:#f4f4f4;left:634.48px;transform:scaleX(0.9400);transform-origin:100% 50%;">37</div>
<div class="t" style="top:790.07px;font-size:13.5px;color:#f4f4f4;left:714.88px;transform:scaleX(0.9400);transform-origin:100% 50%;">37</div>
<div class="t" style="top:790.07px;font-size:13.5px;color:#f4f4f4;left:802.59px;transform:scaleX(0.9400);transform-origin:100% 50%;">3</div>
<div class="t" style="top:790.07px;font-size:13.5px;color:#f4f4f4;left:1013.99px;transform:scaleX(0.9400);transform-origin:100% 50%;">4</div>
<div class="t" style="top:811.62px;font-size:13.8px;color:#fff;font-weight:bold;left:565.47px;transform:scaleX(1.0300);transform-origin:100% 50%;">16.89</div>
<div class="t" style="top:811.62px;font-size:13.8px;color:#fff;font-weight:bold;left:615.47px;transform:scaleX(1.0300);transform-origin:100% 50%;">16.89</div>
<div class="t" style="top:833.87px;font-size:13.5px;color:#f4f4f4;left:565.72px;transform:scaleX(0.9400);transform-origin:100% 50%;">16.89</div>
<div class="t" style="top:833.87px;font-size:13.5px;color:#f4f4f4;left:615.72px;transform:scaleX(0.9400);transform-origin:100% 50%;">16.89</div>
<div class="t" style="top:856.12px;font-size:13.8px;color:#fff;font-weight:bold;left:565.47px;transform:scaleX(1.0300);transform-origin:100% 50%;">61.33</div>
<div class="t" style="top:856.12px;font-size:13.8px;color:#fff;font-weight:bold;left:634.65px;transform:scaleX(1.0300);transform-origin:100% 50%;">32</div>
<div class="t" style="top:856.12px;font-size:13.8px;color:#fff;font-weight:bold;left:715.05px;transform:scaleX(1.0300);transform-origin:100% 50%;">24</div>
<div class="t" style="top:856.12px;font-size:13.8px;color:#fff;font-weight:bold;left:795.25px;transform:scaleX(1.0300);transform-origin:100% 50%;">27</div>
<div class="t" style="top:856.12px;font-size:13.8px;color:#fff;font-weight:bold;left:1006.65px;transform:scaleX(1.0300);transform-origin:100% 50%;">32</div>
<div class="t" style="top:877.67px;font-size:13.5px;color:#f4f4f4;left:565.72px;transform:scaleX(0.9400);transform-origin:100% 50%;">61.33</div>
<div class="t" style="top:877.67px;font-size:13.5px;color:#f4f4f4;left:634.48px;transform:scaleX(0.9400);transform-origin:100% 50%;">32</div>
<div class="t" style="top:877.67px;font-size:13.5px;color:#f4f4f4;left:714.88px;transform:scaleX(0.9400);transform-origin:100% 50%;">24</div>
<div class="t" style="top:877.67px;font-size:13.5px;color:#f4f4f4;left:795.08px;transform:scaleX(0.9400);transform-origin:100% 50%;">27</div>
<div class="t" style="top:877.67px;font-size:13.5px;color:#f4f4f4;left:1006.48px;transform:scaleX(0.9400);transform-origin:100% 50%;">32</div>
<!-- 60_right -->
<div class="a" style="left:1390px;top:98px;width:504px;height:2px;background:#1b84d3;"></div>
<div class="a" style="left:1395px;top:72px;width:32px;height:28px;background:#1b84d3;"></div>
<div class="a" style="left:1397px;top:74.3px;width:27.6px;height:25.7px;background:#222;"></div>
<div class="a" style="left:1390px;top:513px;width:483px;height:21px;background:#222;"></div>
<div class="a" style="left:1390px;top:845.6px;width:483px;height:20.5px;background:#222;"></div>
<div class="a" style="left:1873.5px;top:149px;width:20px;height:562.5px;background:#cdcdcd;"></div>
<svg width="1920" height="1080" viewBox="0 0 1920 1080"><path d="M1879 139.500l4.500-4.500l4.500 4.500" fill="none" stroke="#555" stroke-width="1.800"/><path d="M1879 993l4.500 4.500l4.500-4.500" fill="none" stroke="#555" stroke-width="1.800"/><g transform="rotate(-40 1411 86)"><rect x="1400" y="83.300" width="22" height="5.600" fill="#efe6ff" stroke="#a88ad8" stroke-width=".8"/><path d="M1403 86.500v3M1406 87.500v2M1409 86.500v3M1412 87.500v2M1415 86.500v3M1418 87.500v2" stroke="#8a63b8" stroke-width=".9"/></g><rect x="1440.8" y="76.8" width="4" height="18.4" rx=".8" fill="#3a90dc" transform="rotate(0 1442.8 86)"/><rect x="1440.8" y="76.8" width="4" height="18.4" rx=".8" fill="#3a90dc" transform="rotate(45 1442.8 86)"/><rect x="1440.8" y="76.8" width="4" height="18.4" rx=".8" fill="#3a90dc" transform="rotate(90 1442.8 86)"/><rect x="1440.8" y="76.8" width="4" height="18.4" rx=".8" fill="#3a90dc" transform="rotate(135 1442.8 86)"/><circle cx="1442.8" cy="86" r="6.6" fill="#3a90dc"/><circle cx="1442.8" cy="86" r="3.3" fill="#000"/><g><ellipse cx="1470" cy="87" rx="5.300" ry="4.800" fill="#5d8a2c"/><ellipse cx="1480.300" cy="87" rx="5.300" ry="4.800" fill="#5d8a2c"/><rect x="1470" y="81" width="10" height="5" fill="#5d8a2c"/><ellipse cx="1470" cy="87.500" rx="3.200" ry="3" fill="#cfe3ee"/><ellipse cx="1480.300" cy="87.500" rx="3.200" ry="3" fill="#cfe3ee"/></g><path d="M1497.500 85l11-7.300v16.300h-4v-6h-3.500v4z" fill="#7cc4f8"/><path d="M1508.500 77.700l8 5.300v9l-8 2z" fill="#1e8ee8"/><g transform="translate(1393 104) scale(1)"><path d="M3 15.500L16 4.500" stroke="#8a63b8" stroke-width="1.500"/><path d="M.8 12.500l4.200 5M14 1.500l4.200 5" stroke="#8a63b8" stroke-width="1.700"/><text x="2.500" y="9.500" font-family="Liberation Sans,sans-serif" font-weight="bold" font-size="8.500" fill="#8a63b8" transform="rotate(-40 2.500 9.500)">8&apos;&apos;</text></g><g transform="translate(1417 104) scale(1)"><path d="M2.100 1l7.900-1.300l2 2.300l3-2.200l3.100 3l-4 15.700l-13.400-5.600z" fill="#f3ecff" stroke="#a98ad6" stroke-width=".9"/><text x="3.600" y="10.800" font-family="Liberation Sans,sans-serif" font-weight="bold" font-style="italic" font-size="8.500" fill="#5a2d91" transform="rotate(14 4 11)">ft²</text></g><g transform="translate(1441 104) scale(1)"><path d="M2.100 1l7.900-1.300l2 2.300l3-2.200l3.100 3l-4 15.700l-13.400-5.600z" fill="#fff" stroke="#e4d8f8" stroke-width=".9"/></g><g transform="translate(1464.5 104) scale(1)"><circle cx="9" cy="9" r="8" fill="#f3ecff" stroke="#a98ad6" stroke-width=".8"/><path d="M2.800 14.500l12.400-10.500" stroke="#8a63b8" stroke-width="1.700"/><text x="4" y="8.800" font-family="Liberation Sans,sans-serif" font-weight="bold" font-size="6" fill="#5a2d91" transform="rotate(-40 4 8.800)">2B</text></g><g transform="translate(1489 104) scale(1)"><path d="M13 2L1 16.500h16.500" fill="none" stroke="#8a63b8" stroke-width="1.500"/><text x="8.300" y="14.200" font-family="Liberation Sans,sans-serif" font-weight="bold" font-size="6.500" fill="#8a63b8">32°</text><path d="M8.500 15h9" stroke="#8a63b8" stroke-width=".8"/></g><g transform="translate(1513 104) scale(1)"><path d="M1 16.500L11 1.500c4 3.500 6.500 9 6.500 15z" fill="#f3ecff" stroke="#a98ad6" stroke-width=".8"/><text x="7.800" y="14.800" font-family="Liberation Sans,sans-serif" font-weight="bold" font-size="7.500" fill="#5a2d91">3&apos;</text></g><path d="M1537.600 111.800h5.400l-2.700 3z" fill="#fff"/><g transform="translate(1548.5 104) scale(1)"><defs><linearGradient id="vg1548_104" x1="0" y1="0" x2="0" y2="1"><stop offset="0" stop-color="#9fc0f0"/><stop offset="1" stop-color="#eef4ff"/></linearGradient></defs><path d="M1.500 16.500v-5l4-3.500h11.500v5l-4 3.500z" fill="url(#vg1548_104)"/><path d="M1.500 6l4-4.500h11.500v11.500l-4 3.500h-11.500zM1.500 6h11.500v10.500M13 6l4-4.500M5.500 1.500v11l-4 4M5.500 12.500h11.500" fill="none" stroke="#8a63b8" stroke-width="1.100"/></g><g transform="translate(1572.8 103.7) scale(1)"><text x="0" y="13.500" font-family="Liberation Sans,sans-serif" font-weight="bold" font-size="11" fill="#8a63b8" letter-spacing=".8">123</text></g><rect x="1597" y="105" width="1.200" height="16.500" fill="#cfcfcf"/><g transform="translate(1603 104) scale(1)"><path d="M1 2.500l16.500-1v15l-16-1.500z" fill="#f3ecff" stroke="#a98ad6" stroke-width=".8"/><rect x="7" y="4" width="8.500" height="6.500" fill="#2a2a2a"/><text x="1.800" y="8.500" font-family="Liberation Sans,sans-serif" font-weight="bold" font-size="6" fill="#5a2d91">3&apos;</text><text x="10.500" y="15.500" font-family="Liberation Sans,sans-serif" font-weight="bold" font-size="6" fill="#5a2d91">4&apos;</text></g><path d="M1402 136.9h7.200l-3.600 4.200z" fill="#fff"/><path d="M1402 521.4h7.200l-3.600 4.200z" fill="#fff"/><path d="M1402 853.6999999999999h7.200l-3.600 4.200z" fill="#fff"/><rect x="1398.5" y="163.0" width="14" height="14" fill="#fff" stroke="#333" stroke-width="1"/><path d="M1401.2 170.0l3 3.300l5.500-7" fill="none" stroke="#111" stroke-width="1.900"/><rect x="1398.5" y="189.3" width="14" height="14" fill="#fff" stroke="#333" stroke-width="1"/><rect x="1398.5" y="215.1" width="14" height="14" fill="#fff" stroke="#333" stroke-width="1"/><path d="M1401.2 222.1l3 3.300l5.500-7" fill="none" stroke="#111" stroke-width="1.900"/><rect x="1398.5" y="242.5" width="58.5" height="21" fill="#fff" stroke="#7a7a7a" stroke-width="1"/><rect x="1464.5" y="242.5" width="59" height="21" fill="#fff" stroke="#7a7a7a" stroke-width="1"/><path d="M1509.5 251.0l4 4l4-4" fill="none" stroke="#333" stroke-width="1.500"/><rect x="1554.5" y="242.5" width="58.5" height="21" fill="#fff" stroke="#7a7a7a" stroke-width="1"/><rect x="1620.9" y="242.5" width="59" height="21" fill="#fff" stroke="#7a7a7a" stroke-width="1"/><path d="M1665.9 251.0l4 4l4-4" fill="none" stroke="#333" stroke-width="1.500"/><rect x="1398.5" y="295.5" width="99" height="20" fill="#fff" stroke="#7a7a7a" stroke-width="1"/><path d="M1483.5 303.5l4 4l4-4" fill="none" stroke="#333" stroke-width="1.500"/><rect x="1398.5" y="341.3" width="99" height="20" fill="#fff" stroke="#7a7a7a" stroke-width="1"/><path d="M1483.5 349.3l4 4l4-4" fill="none" stroke="#333" stroke-width="1.500"/><rect x="1398.5" y="416.3" width="134" height="20" fill="#fff" stroke="#7a7a7a" stroke-width="1"/><path d="M1518.5 424.3l4 4l4-4" fill="none" stroke="#333" stroke-width="1.500"/><defs><linearGradient id="bg1" x1="0" y1="0" x2="0" y2="1"><stop offset="0" stop-color="#ececec"/><stop offset="1" stop-color="#dcdcdc"/></linearGradient></defs><rect x="1399.500" y="444.500" width="132" height="25.500" fill="url(#bg1)" stroke="#a0a0a0" stroke-width="1"/><rect x="1399.500" y="477.500" width="132" height="25" fill="#f2f2f2" stroke="#cfcfcf" stroke-width="1"/><rect x="1478.7" y="543.0" width="385.7" height="20.2" fill="#fff" stroke="#a8a8a8" stroke-width="1"/><rect x="1478.7" y="571.3" width="385.7" height="20.2" fill="#fff" stroke="#a8a8a8" stroke-width="1"/><rect x="1478.7" y="598.7" width="320.5" height="20.2" fill="#fff" stroke="#a8a8a8" stroke-width="1"/><rect x="1806.8" y="598.7" width="57.6" height="20.2" fill="#fff" stroke="#a8a8a8" stroke-width="1"/><path d="M1850.3999999999999 606.8000000000001l4 4l4-4" fill="none" stroke="#333" stroke-width="1.500"/><rect x="1429.1" y="878.2" width="435.3" height="113.7" fill="#fff" stroke="#8c8c8c" stroke-width="1"/><rect x="1398" y="879.5" width="22" height="21.500" fill="#f0f0f0" stroke="#d0d0d0" stroke-width="1"/><path d="M1403.500 893.5h11l-5.500-7.500z" fill="#8c8c8c"/><rect x="1398" y="911.3" width="22" height="21.500" fill="#f0f0f0" stroke="#d0d0d0" stroke-width="1"/><path d="M1403.500 918.3h11l-5.500 7.500z" fill="#8c8c8c"/><rect x="1398" y="942.9" width="22" height="21.500" fill="#f0f0f0" stroke="#d0d0d0" stroke-width="1"/><path d="M1403.700 948.4h3l2.300 3l2.300-3h3l-3.800 5l3.800 5h-3l-2.300-3l-2.300 3h-3l3.800-5z" fill="#8c8c8c"/><rect x="1710.500" y="1000.500" width="72" height="10" fill="#f0f0f0" stroke="#c8c8c8" stroke-width="1"/><rect x="1791.700" y="1000.500" width="72" height="10" fill="#f0f0f0" stroke="#d4d4d4" stroke-width="1"/></svg>
<div class="a" style="left:1390px;top:1006px;width:530px;height:26px;background:#222;"></div>
<div class="t" style="top:131.55px;font-size:14px;color:#f4f4f4;left:1421.40px;transform:scaleX(0.9709);transform-origin:0 50%;">Scale</div>
<div class="t" style="top:517.57px;font-size:13.5px;color:#f4f4f4;left:1421.00px;transform:scaleX(0.9946);transform-origin:0 50%;">Measurements</div>
<div class="t" style="top:849.07px;font-size:13.5px;color:#f4f4f4;left:1421.00px;transform:scaleX(0.9927);transform-origin:0 50%;">Viewports</div>
<div class="t" style="top:162.99px;font-size:13.6px;color:#1a1a1a;left:1420.40px;transform:scaleX(0.9816);transform-origin:0 50%;">Store Scale in Page</div>
<div class="t" style="top:190.09px;font-size:13.6px;color:#1a1a1a;left:1420.40px;">Separate Vertical Scale</div>
<div class="t" style="top:215.79px;font-size:13.6px;color:#1a1a1a;left:1420.40px;transform:scaleX(0.9656);transform-origin:0 50%;">Independent Units</div>
<div class="t" style="top:246.29px;font-size:13.6px;color:#1a1a1a;left:1400.80px;transform:scaleX(0.9202);transform-origin:0 50%;">2.583329</div>
<div class="t" style="top:246.29px;font-size:13.6px;color:#1a1a1a;left:1470.40px;">in</div>
<div class="t" style="top:245.29px;font-size:13.6px;color:#1a1a1a;left:1536.43px;">=</div>
<div class="t" style="top:246.29px;font-size:13.6px;color:#1a1a1a;left:1557.00px;transform:scaleX(0.9167);transform-origin:0 50%;">20.66667</div>
<div class="t" style="top:246.29px;font-size:13.6px;color:#1a1a1a;left:1625.80px;transform:scaleX(0.9269);transform-origin:0 50%;">ft&#x27; in&quot;</div>
<div class="t" style="top:277.59px;font-size:13.6px;color:#1a1a1a;left:1400.80px;transform:scaleX(0.9790);transform-origin:0 50%;">Area Unit</div>
<div class="t" style="top:299.19px;font-size:13.6px;color:#1a1a1a;left:1404.20px;">sq yd</div>
<div class="t" style="top:323.39px;font-size:13.6px;color:#1a1a1a;left:1400.80px;transform:scaleX(0.9887);transform-origin:0 50%;">Volume Unit</div>
<div class="t" style="top:345.09px;font-size:13.6px;color:#1a1a1a;left:1404.20px;transform:scaleX(0.9844);transform-origin:0 50%;">cu yd</div>
<div class="t" style="top:400.49px;font-size:13.6px;color:#1a1a1a;left:1400.80px;">Precision</div>
<div class="t" style="top:419.19px;font-size:13.6px;color:#1a1a1a;left:1404.20px;">1</div>
<div class="t" style="top:450.49px;font-size:13.6px;color:#1a1a1a;left:1438.29px;transform:scaleX(0.9830);transform-origin:50% 50%;">Calibrate</div>
<div class="t" style="top:483.29px;font-size:13.6px;color:#a3a3a3;left:1429.97px;transform:scaleX(1.0062);transform-origin:50% 50%;">Recalculate</div>
<div class="t" style="top:546.79px;font-size:13.6px;color:#1a1a1a;left:1419.16px;transform:scaleX(0.9768);transform-origin:100% 50%;">Subject:</div>
<div class="t" style="top:546.79px;font-size:13.6px;color:#1a1a1a;left:1481.00px;">Volume Measurement</div>
<div class="t" style="top:575.19px;font-size:13.6px;color:#1a1a1a;left:1431.25px;">Label:</div>
<div class="t" style="top:603.49px;font-size:13.6px;color:#1a1a1a;left:1428.23px;transform:scaleX(0.9608);transform-origin:100% 50%;">Depth:</div>
<div class="t" style="top:603.49px;font-size:13.6px;color:#1a1a1a;left:1481.50px;">4</div>
<div class="t" style="top:603.49px;font-size:13.6px;color:#1a1a1a;left:1812.00px;transform:scaleX(0.9269);transform-origin:0 50%;">ft&#x27; in&quot;</div>
<div class="t" style="top:630.79px;font-size:13.6px;color:#1a1a1a;left:1430.50px;transform:scaleX(1.0053);transform-origin:100% 50%;">Scale:</div>
<div class="t" style="top:630.79px;font-size:13.6px;color:#1a1a1a;left:1481.00px;transform:scaleX(0.9068);transform-origin:0 50%;">2.583329 in = 20.66667 ft&#x27; in&quot;</div>
<div class="t" style="top:653.49px;font-size:13.6px;color:#1a1a1a;left:1627.00px;transform:scaleX(0.9350);transform-origin:0 50%;">Current</div>
<div class="t" style="top:653.49px;font-size:13.6px;color:#1a1a1a;left:1831.47px;transform:scaleX(1.0513);transform-origin:100% 50%;">Total</div>
<div class="t" style="top:671.89px;font-size:13.6px;color:#1a1a1a;left:1425.32px;transform:scaleX(0.9587);transform-origin:100% 50%;">Length:</div>
<div class="t" style="top:689.84px;font-size:13.6px;color:#1a1a1a;left:1438.19px;transform:scaleX(0.9844);transform-origin:100% 50%;">Area:</div>
<div class="t" style="top:707.79px;font-size:13.6px;color:#1a1a1a;left:1407.97px;transform:scaleX(0.9725);transform-origin:100% 50%;">Perimeter:</div>
<div class="t" style="top:725.74px;font-size:13.6px;color:#1a1a1a;left:1411.75px;transform:scaleX(0.9839);transform-origin:100% 50%;">Diameter:</div>
<div class="t" style="top:743.69px;font-size:13.6px;color:#1a1a1a;left:1432.14px;transform:scaleX(0.9854);transform-origin:100% 50%;">Angle:</div>
<div class="t" style="top:761.64px;font-size:13.6px;color:#1a1a1a;left:1424.59px;">Radius:</div>
<div class="t" style="top:779.59px;font-size:13.6px;color:#1a1a1a;left:1421.56px;">Volume:</div>
<div class="t" style="top:797.54px;font-size:13.6px;color:#1a1a1a;left:1430.63px;transform:scaleX(0.9109);transform-origin:100% 50%;">Count:</div>
<div class="t" style="top:779.59px;font-size:13.6px;color:#1a1a1a;left:1619.80px;transform:scaleX(0.9570);transform-origin:0 50%;">32 cu yd</div>
<div class="t" style="top:779.59px;font-size:13.6px;color:#1a1a1a;left:1808.79px;transform:scaleX(0.9570);transform-origin:100% 50%;">32 cu yd</div>
<div class="t" style="top:818.19px;font-size:13.6px;color:#1c1cb0;left:1829.50px;transform:scaleX(0.9692);transform-origin:0 50%;text-decoration:underline;">Clear</div>
<!-- 70_sidebar -->
<svg width="1920" height="1080" viewBox="0 0 1920 1080"><rect x="1900.5" y="71" width="2" height="2" rx=".6" fill="#d8d8d8"/><rect x="1904.8" y="71" width="2" height="2" rx=".6" fill="#d8d8d8"/><rect x="1909.1" y="71" width="2" height="2" rx=".6" fill="#d8d8d8"/><rect x="1913.4" y="71" width="2" height="2" rx=".6" fill="#d8d8d8"/><rect x="1900.5" y="272" width="2" height="2" rx=".6" fill="#d8d8d8"/><rect x="1904.8" y="272" width="2" height="2" rx=".6" fill="#d8d8d8"/><rect x="1909.1" y="272" width="2" height="2" rx=".6" fill="#d8d8d8"/><rect x="1913.4" y="272" width="2" height="2" rx=".6" fill="#d8d8d8"/><path d="M1898.800 96l6.200-13.500h2.600l6.200 13.500h-2.500l-1.500-3.500h-7l-1.500 3.500zM1903.700 90.500h5.200l-2.600-6z" fill="#1b84d3"/><rect x="1901.500" y="107" width="10" height="7" fill="#fff"/><path d="M1898.500 114h16l1 8h-18z" fill="#5b9bd9"/><rect x="1899" y="122" width="15" height="2.300" fill="#9cc2ea"/><path d="M1900.500 116.500h12M1900.500 119h12" stroke="#dcebf8" stroke-width="1" stroke-dasharray="1.2 1.2"/><path d="M1897.500 135.500l16-1.200l1 15l-13.500 2l-3.500-3z" fill="#f6e94a"/><path d="M1900 141c1-2 2-2 2.500 0s1.500 1 2-.5s1.500 0 2 1l3-.5M1900.500 146c1.500 1.500 3 1.500 4-.5" fill="none" stroke="#3a3a20" stroke-width=".9"/><path d="M1897 166l13-.5l5.500 3v9l-18.500-.5z" fill="#c9202b"/><path d="M1903 168.500l9 9.500" stroke="#7ab82e" stroke-width="3.200" stroke-linecap="round"/><path d="M1903 168.500l9 9.500" stroke="#c9202b" stroke-width="1" stroke-dasharray="2 3"/><path d="M1898.500 204l2-4l11-11c1.500-1.500 4 .5 2.500 2.300l-11 10.700z" fill="#1b6fb8"/><path d="M1897 206l1.500-2l1 1z" fill="#ccc"/><path d="M1898.500 231l2-4l11-11c1.500-1.500 4.200.8 2.700 2.600l-10.700 10.900z" fill="#f5e71c"/><path d="M1897 233l1.500-2l1.500 1z" fill="#e0c81a"/><path d="M1897 252l8-6.500l10.500 1.500l-7.500 7v3l-11-1.800z" fill="#dc7080"/><path d="M1897 252l11 2l7.500-7" fill="none" stroke="#f0a0ac" stroke-width=".8"/><g transform="rotate(-42 1906 290)"><rect x="1895.500" y="287" width="21" height="6.500" fill="#efe6ff" stroke="#a88ad8" stroke-width=".8"/><path d="M1898.500 290.500v3M1901.500 291.500v2M1904.500 290.500v3M1907.500 291.500v2M1910.500 290.500v3M1913.500 291.500v2" stroke="#8a63b8" stroke-width=".9"/></g><path d="M1914 309l-7 9M1907 318c-3-2-7-1-8.500 2s0 5 2.500 5M1907 318l1.500 8.500" fill="none" stroke="#8a63b8" stroke-width="1.400"/><circle cx="1911.500" cy="312.500" r="1.800" fill="none" stroke="#8a63b8" stroke-width="1"/><rect x="1897" y="333.800" width="19" height="1.200" fill="#cfcfcf"/><g transform="translate(1897 341) scale(1)"><path d="M3 15.500L16 4.500" stroke="#8a63b8" stroke-width="1.500"/><path d="M.8 12.500l4.200 5M14 1.500l4.200 5" stroke="#8a63b8" stroke-width="1.700"/><text x="2.500" y="9.500" font-family="Liberation Sans,sans-serif" font-weight="bold" font-size="8.500" fill="#8a63b8" transform="rotate(-40 2.500 9.500)">8&apos;&apos;</text></g><g transform="translate(1897 367.5) scale(1)"><path d="M2.100 1l7.900-1.300l2 2.300l3-2.200l3.100 3l-4 15.700l-13.400-5.600z" fill="#f3ecff" stroke="#a98ad6" stroke-width=".9"/><text x="3.600" y="10.800" font-family="Liberation Sans,sans-serif" font-weight="bold" font-style="italic" font-size="8.500" fill="#5a2d91" transform="rotate(14 4 11)">ft²</text></g><g transform="translate(1897 394) scale(1)"><path d="M2.100 1l7.900-1.300l2 2.300l3-2.200l3.100 3l-4 15.700l-13.400-5.600z" fill="#fff" stroke="#e4d8f8" stroke-width=".9"/></g><g transform="translate(1897 422) scale(1)"><circle cx="9" cy="9" r="8" fill="#f3ecff" stroke="#a98ad6" stroke-width=".8"/><path d="M2.800 14.500l12.400-10.500" stroke="#8a63b8" stroke-width="1.700"/><text x="4" y="8.800" font-family="Liberation Sans,sans-serif" font-weight="bold" font-size="6" fill="#5a2d91" transform="rotate(-40 4 8.800)">2B</text></g><g transform="translate(1897 449) scale(1)"><path d="M13 2L1 16.500h16.500" fill="none" stroke="#8a63b8" stroke-width="1.500"/><text x="8.300" y="14.200" font-family="Liberation Sans,sans-serif" font-weight="bold" font-size="6.500" fill="#8a63b8">32°</text><path d="M8.500 15h9" stroke="#8a63b8" stroke-width=".8"/></g><g transform="translate(1897 476) scale(1)"><path d="M1 16.500L11 1.500c4 3.500 6.500 9 6.500 15z" fill="#f3ecff" stroke="#a98ad6" stroke-width=".8"/><text x="7.800" y="14.800" font-family="Liberation Sans,sans-serif" font-weight="bold" font-size="7.500" fill="#5a2d91">3&apos;</text></g><g transform="translate(1897 503) scale(1)"><defs><linearGradient id="vg1897_503" x1="0" y1="0" x2="0" y2="1"><stop offset="0" stop-color="#9fc0f0"/><stop offset="1" stop-color="#eef4ff"/></linearGradient></defs><path d="M1.500 16.500v-5l4-3.500h11.500v5l-4 3.500z" fill="url(#vg1897_503)"/><path d="M1.500 6l4-4.500h11.500v11.500l-4 3.500h-11.500zM1.500 6h11.500v10.500M13 6l4-4.500M5.500 1.500v11l-4 4M5.500 12.500h11.500" fill="none" stroke="#8a63b8" stroke-width="1.100"/></g><g transform="translate(1897.5 529.5) scale(0.92)"><text x="0" y="13.500" font-family="Liberation Sans,sans-serif" font-weight="bold" font-size="11" fill="#8a63b8" letter-spacing=".8">123</text></g><rect x="1897" y="555.200" width="19" height="1.200" fill="#cfcfcf"/><g transform="translate(1897 563) scale(1)"><path d="M1 2.500l16.500-1v15l-16-1.500z" fill="#f3ecff" stroke="#a98ad6" stroke-width=".8"/><rect x="7" y="4" width="8.500" height="6.500" fill="#2a2a2a"/><text x="1.800" y="8.500" font-family="Liberation Sans,sans-serif" font-weight="bold" font-size="6" fill="#5a2d91">3&apos;</text><text x="10.500" y="15.500" font-family="Liberation Sans,sans-serif" font-weight="bold" font-size="6" fill="#5a2d91">4&apos;</text></g></svg>
<!-- 80_status -->
<div class="a" style="left:1355px;top:1008px;width:65px;height:24px;background:#0a84dc;"></div>
<div class="a" style="left:1535px;top:1008px;width:55px;height:24px;background:#0a84dc;"></div>
<div class="t" style="top:1013.53px;font-size:14.5px;color:#ececec;left:5.50px;transform:scaleX(1.0352);transform-origin:0 50%;">Drag control points to resize, or drag area measurement to move</div>
<div class="t" style="top:1013.53px;font-size:14.5px;color:#ececec;left:1274.00px;">Grid</div>
<div class="t" style="top:1013.53px;font-size:14.5px;color:#ececec;left:1315.00px;transform:scaleX(0.9597);transform-origin:0 50%;">Snap</div>
<div class="t" style="top:1013.53px;font-size:14.5px;color:#ececec;left:1361.50px;transform:scaleX(1.0042);transform-origin:0 50%;">Content</div>
<div class="t" style="top:1013.53px;font-size:14.5px;color:#ececec;left:1426.00px;transform:scaleX(1.0134);transform-origin:0 50%;">Markup</div>
<div class="t" style="top:1013.53px;font-size:14.5px;color:#ececec;left:1489.00px;transform:scaleX(0.9185);transform-origin:0 50%;">Reuse</div>
<div class="t" style="top:1013.53px;font-size:14.5px;color:#ececec;left:1541.00px;transform:scaleX(0.9306);transform-origin:0 50%;">Sync</div>
<div class="t" style="top:1013.53px;font-size:14.5px;color:#ececec;left:1622.50px;transform:scaleX(0.9728);transform-origin:0 50%;">252.00 x 180.00 pc</div>
<div class="t" style="top:1013.53px;font-size:14.5px;color:#ececec;left:1789.00px;transform:scaleX(0.9632);transform-origin:0 50%;">(202.75, 131.33)</div>
<svg width="1920" height="1080" viewBox="0 0 1920 1080"><path d="M1581.300 1019h5.400l-2.700 3z" fill="#fff"/></svg>
<!-- 90_taskbar -->
<div class="a" style="left:62px;top:1033px;width:64px;height:47px;background:rgba(255,255,255,.16);border:1px solid rgba(255,255,255,.28);border-bottom:none"></div>
<div class="a" style="left:127px;top:1033px;width:4px;height:47px;background:rgba(255,255,255,.10);border-right:1px solid rgba(255,255,255,.25)"></div>
<div class="a" style="left:281px;top:1033px;width:69px;height:47px;background:rgba(255,255,255,.16);border:1px solid rgba(255,255,255,.28);border-bottom:none"></div>
<div class="a" style="left:427px;top:1033px;width:69px;height:47px;background:rgba(255,255,255,.38);border:1px solid rgba(255,255,255,.6);border-bottom:none"></div>
<svg width="1920" height="1080" viewBox="0 0 1920 1080"><path d="M1140 1080L1340 1032" stroke="#b08070" stroke-width="1" opacity=".6"/><path d="M13.500 1043.300l13.300-2v13.600h-13.300zM28.500 1041l17.500-2.700v16.600h-17.500zM13.500 1056.500h13.300v13.600l-13.300-2zM28.500 1056.500h17.500v16.300l-17.500-2.600z" fill="#fff"/><defs><clipPath id="iec"><rect x="70" y="1056" width="50" height="24"/></clipPath></defs><text x="79.500" y="1072.800" font-family="Liberation Sans,sans-serif" font-weight="bold" font-size="57" fill="#35aef0">e</text><ellipse cx="94" cy="1053" rx="22" ry="8" fill="none" stroke="#f2c326" stroke-width="3" transform="rotate(-30 94 1053)"/><text x="79.500" y="1072.800" font-family="Liberation Sans,sans-serif" font-weight="bold" font-size="57" fill="#35aef0" clip-path="url(#iec)">e</text><path d="M162 1039.500h13.500l-12.800 22.200l-6.800-11.600z" fill="#1fa463"/><path d="M162 1039.500h13.500l12.800 22.200h-13.500z" fill="#ffd04b"/><path d="M162.500 1061.700h25.800l-6.600 11h-25.600z" fill="#4285f4"/><path d="M156 1050l6.700 11.700l-6.500 11l-6.700-11z" fill="#1fa463"/><defs><linearGradient id="fo" x1="0" y1="0" x2="0" y2="1"><stop offset="0" stop-color="#fbeeb0"/><stop offset="1" stop-color="#f2d673"/></linearGradient><linearGradient id="fb" x1="0" y1="0" x2="0" y2="1"><stop offset="0" stop-color="#8fd0f4"/><stop offset="1" stop-color="#4da6e0"/></linearGradient></defs><path d="M224 1040.500h12l2 2.500h10l2 2.500h11v10h-37z" fill="#efcf68"/><rect x="227" y="1038" width="9" height="4" fill="#fff"/><rect x="227.500" y="1038.500" width="2.500" height="2.500" fill="#3a9a3a"/><rect x="237" y="1041" width="10" height="4" fill="#fff"/><rect x="237.500" y="1041.500" width="2.500" height="2.500" fill="#d04a2a"/><rect x="248" y="1043.500" width="11" height="4" fill="#fff"/><rect x="248.500" y="1044" width="2.500" height="2.500" fill="#2a7ad0"/><path d="M223.500 1048h38v25.500h-38z" fill="url(#fo)"/><path d="M231 1059.500h23c2 0 3.200 1.200 3.200 3.200v11.300h-7.700v-7h-14v7h-7.700v-11.300c0-2 1.200-3.200 3.200-3.200z" fill="url(#fb)"/><circle cx="314.200" cy="1056" r="18" fill="#e0362c"/><path d="M314.200 1056L298.600 1047a18 18 0 0 0 7.600 25.200z" fill="#30a14e"/><path d="M314.200 1056l-8 16.200a18 18 0 0 0 25.600-13.200z" fill="#fcd116"/><path d="M314.200 1056l-15.600-9a18 18 0 0 0 8.600 25.600l7-12z" fill="#30a14e"/><path d="M314.200 1056h17.800a18 18 0 0 1-24.800 16.600z" fill="#fcd116"/><circle cx="314.200" cy="1056" r="8.300" fill="#fff"/><circle cx="314.200" cy="1056" r="6.600" fill="#3f82e0"/><defs><linearGradient id="ol" x1="0" y1="0" x2="1" y2="0"><stop offset="0" stop-color="#f4c437"/><stop offset="1" stop-color="#fdf1bb"/></linearGradient></defs><path d="M369 1040c6-3.500 20-3.500 35.500-2.500v37.500h-35.500z" fill="url(#ol)"/><path d="M377 1062l14 8l13.500-9v14h-27.500z" fill="#fbe7a0" stroke="#f0c860" stroke-width=".7"/><ellipse cx="380.800" cy="1053.500" rx="6" ry="8.800" fill="none" stroke="#ee9a1c" stroke-width="4.600"/><ellipse cx="380.800" cy="1053.500" rx="6" ry="8.800" fill="none" stroke="#f9c45a" stroke-width="1.300"/><circle cx="399.500" cy="1052.500" r="5.600" fill="#fff4d0" stroke="#eeb030" stroke-width="1.200"/><path d="M398.200 1049.500l1.300 3.300h3" stroke="#c87a10" stroke-width="1.100" fill="none"/><defs><radialGradient id="rv" cx=".35" cy=".28" r=".85"><stop offset="0" stop-color="#8a8a8a"/><stop offset=".45" stop-color="#2a2a2a"/><stop offset="1" stop-color="#000"/></radialGradient></defs><circle cx="460.500" cy="1056" r="19.500" fill="url(#rv)"/><defs><clipPath id="rvc"><circle cx="460.500" cy="1056" r="19.500"/></clipPath></defs><path d="M450.500 1073L456.500 1041.500C463 1036 479.500 1039.500 477.500 1049.500C476.300 1057 466 1061 459.500 1061.500L469.500 1076" fill="none" stroke="#fff" stroke-width="4" stroke-linejoin="miter" clip-path="url(#rvc)"/><rect x="1623" y="1046" width="37" height="22" rx="2.500" fill="none" stroke="#fff" stroke-width="1.600"/><rect x="1627.0" y="1049.5" width="3" height="3" fill="#fff"/><rect x="1631.3" y="1049.5" width="3" height="3" fill="#fff"/><rect x="1635.6" y="1049.5" width="3" height="3" fill="#fff"/><rect x="1639.9" y="1049.5" width="3" height="3" fill="#fff"/><rect x="1644.2" y="1049.5" width="3" height="3" fill="#fff"/><rect x="1648.5" y="1049.5" width="3" height="3" fill="#fff"/><rect x="1652.8" y="1049.5" width="3" height="3" fill="#fff"/><rect x="1627.0" y="1053.7" width="3" height="3" fill="#fff"/><rect x="1631.3" y="1053.7" width="3" height="3" fill="#fff"/><rect x="1635.6" y="1053.7" width="3" height="3" fill="#fff"/><rect x="1639.9" y="1053.7" width="3" height="3" fill="#fff"/><rect x="1644.2" y="1053.7" width="3" height="3" fill="#fff"/><rect x="1648.5" y="1053.7" width="3" height="3" fill="#fff"/><rect x="1652.8" y="1053.7" width="3" height="3" fill="#fff"/><rect x="1627.0" y="1057.9" width="3" height="3" fill="#fff"/><rect x="1631.3" y="1057.9" width="3" height="3" fill="#fff"/><rect x="1635.6" y="1057.9" width="3" height="3" fill="#fff"/><rect x="1639.9" y="1057.9" width="3" height="3" fill="#fff"/><rect x="1644.2" y="1057.9" width="3" height="3" fill="#fff"/><rect x="1648.5" y="1057.9" width="3" height="3" fill="#fff"/><rect x="1652.8" y="1057.9" width="3" height="3" fill="#fff"/><rect x="1627" y="1062" width="3" height="3" fill="#fff"/><rect x="1631.500" y="1062" width="16.500" height="3" fill="#fff"/><rect x="1649.500" y="1062" width="6" height="3" fill="#fff"/><path d="M1678.300 1059.300h10l-5-5.500z" fill="#fff"/><path d="M1708.500 1048v5M1712 1048v5" stroke="#fff" stroke-width="1.300"/><path d="M1707.500 1053h5.500v3.500c0 1.500-1 2.300-2 2.500v7h-1.500v-7c-1-.2-2-1-2-2.500z" fill="#fff"/><rect x="1715.500" y="1049" width="9.500" height="16.500" rx="1.200" fill="none" stroke="#fff" stroke-width="1.300"/><rect x="1718" y="1047.500" width="4.500" height="1.800" fill="#fff"/><rect x="1717.500" y="1051" width="5.500" height="12.500" fill="#fff"/><rect x="1741" y="1049.500" width="14" height="10.500" fill="none" stroke="#fff" stroke-width="1.300"/><path d="M1748 1060v3.500M1743.500 1064.200h9" stroke="#fff" stroke-width="1.300"/><rect x="1737" y="1047.500" width="4.500" height="5.500" rx="1" fill="none" stroke="#fff" stroke-width="1.200"/><path d="M1739.300 1053v10" stroke="#fff" stroke-width="1.200"/><path d="M1768 1053.500h3.500l5-5.500v18l-5-5.500h-3.500z" fill="none" stroke="#fff" stroke-width="1.200"/><path d="M1780 1052.500c1.500 2 1.500 7 0 9" fill="none" stroke="#fff" stroke-width="1"/><path d="M1802.500 1048h6.800l-6.500 11.200l-3.400-5.800z" fill="#1fa463"/><path d="M1802.500 1048h6.800l6.500 11.200h-6.800z" fill="#ffd04b"/><path d="M1802.800 1059.200h13l-3.300 5.800h-13z" fill="#4285f4"/><path d="M1799.400 1053.400l3.400 5.800l-3.300 5.800l-3.400-5.800z" fill="#1fa463"/></svg>
<div class="t" style="top:1039.92px;font-size:13.8px;color:#fbf3f3;left:1842.00px;transform:scaleX(1.0060);transform-origin:0 50%;">5:12 PM</div>
<div class="t" style="top:1061.92px;font-size:13.8px;color:#fbf3f3;left:1834.20px;transform:scaleX(1.1044);transform-origin:0 50%;">5/12/2014</div>
</body></html>
